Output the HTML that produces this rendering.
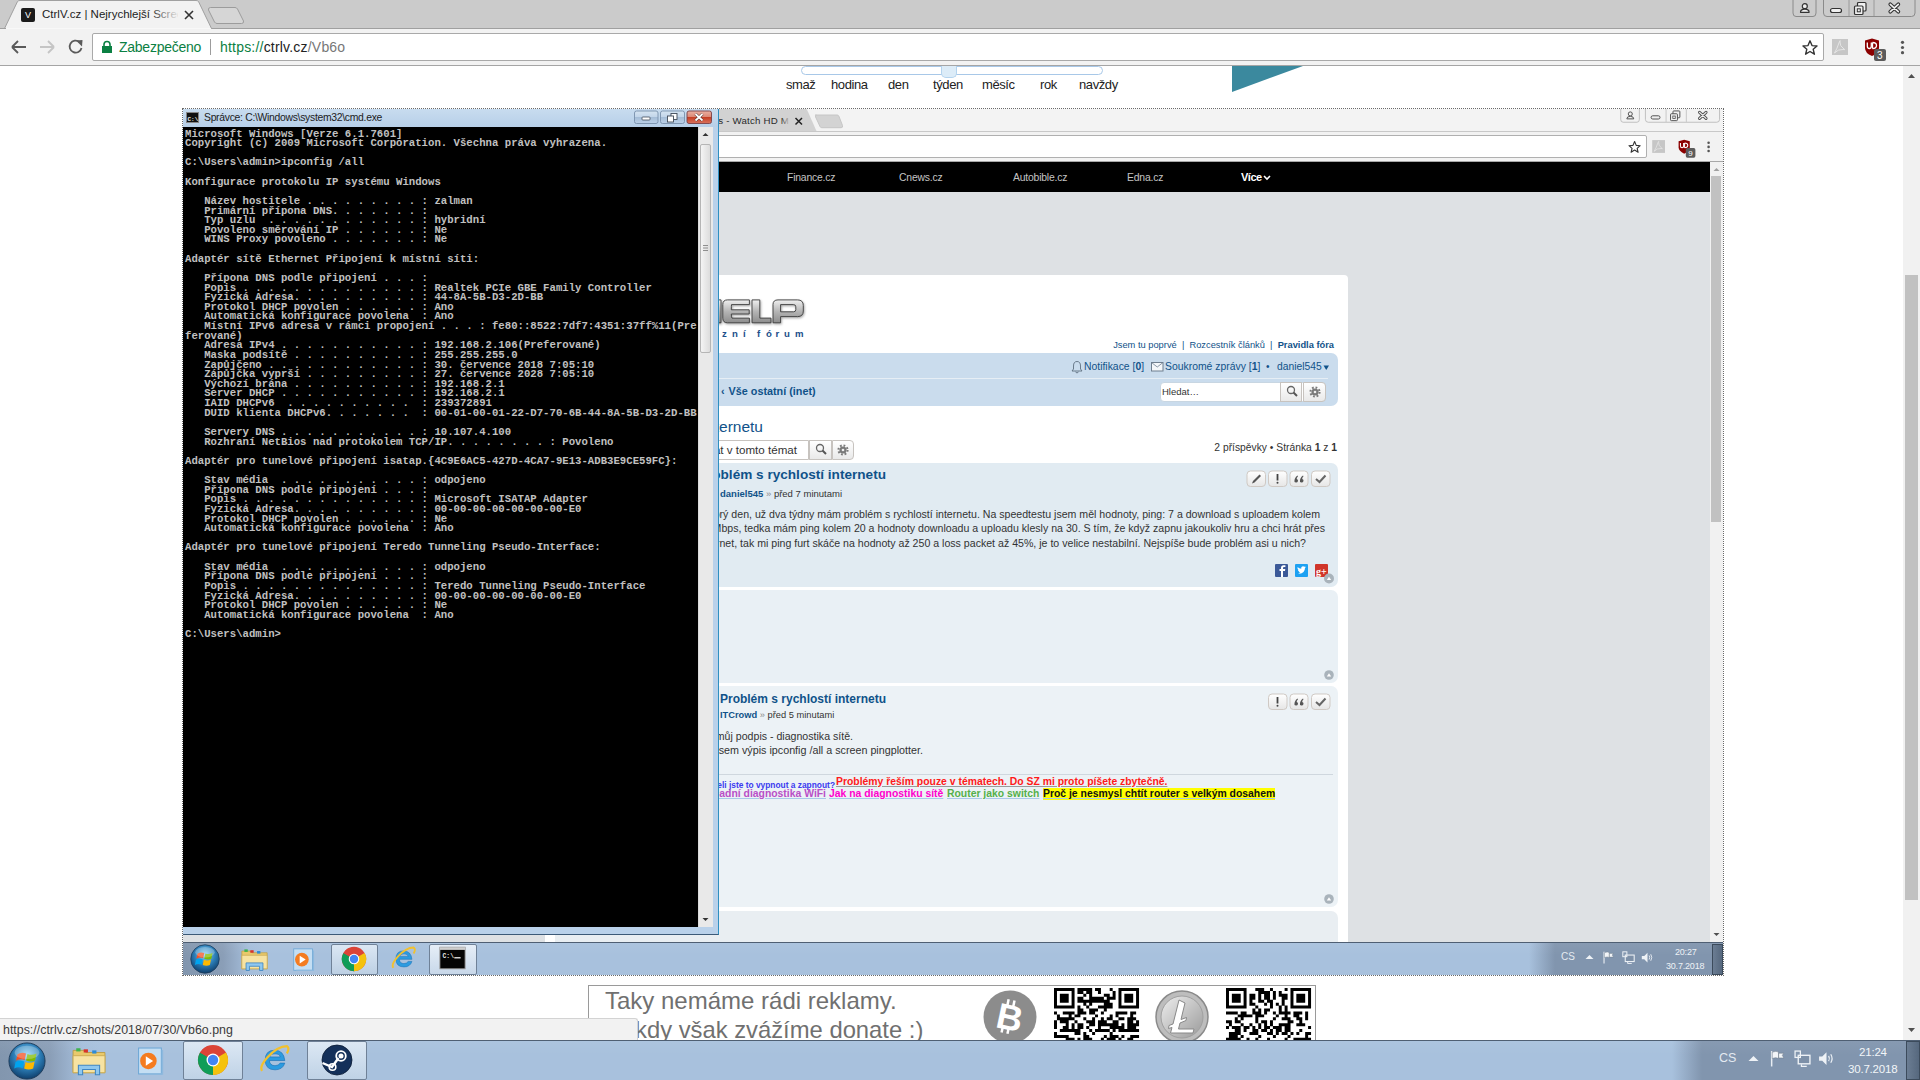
<!DOCTYPE html>
<html><head><meta charset="utf-8">
<style>
*{margin:0;padding:0;box-sizing:border-box}
html,body{width:1920px;height:1080px;overflow:hidden;background:#fff;font-family:"Liberation Sans",sans-serif}
div,span,svg{position:absolute}
.t{white-space:nowrap}
/* outer chrome */
#tabstrip{left:0;top:0;width:1920px;height:28px;background:#cbcbcb}
#toolbar{left:0;top:29px;width:1920px;height:37px;background:#f2f2f2;border-bottom:1px solid #a5a5a5}
#omni{left:92px;top:33px;width:1732px;height:28px;background:#fff;border:1px solid #a9a9a9;border-radius:2px}
#vscroll{left:1903px;top:66px;width:17px;height:974px;background:#f1f1f1}
#status{left:0;top:1018px;width:638px;height:22px;background:#f2f2f2;border-top:1px solid #d3d3d3;border-right:1px solid #d3d3d3;border-top-right-radius:3px;font-size:12.4px;color:#3a3a3a;padding:4px 0 0 3px;white-space:nowrap}
.tb{background:linear-gradient(to right,#a8c1dd 0,#a8c1dd 100%);border-top:1px solid #5b6b80}
#taskbar{left:0;top:1040px;width:1920px;height:40px}
/* screenshot */
#shotb{left:182px;top:108px;width:1542px;height:868px;border:1px dotted #6a6a6a}
#shot{left:183px;top:109px;width:1540px;height:866px;overflow:hidden;background:#dee1e4}
#sc{left:-183px;top:-109px;width:1920px;height:1080px}
.cmdtxt{font-family:"Liberation Mono",monospace;font-size:10.67px;line-height:9.6px;color:#c0c0c0;font-weight:bold;white-space:pre;letter-spacing:0}
</style></head><body>

<svg width="0" height="0" style="left:0;top:0">
<defs>
  <radialGradient id="orbg" cx="0.5" cy="0.35" r="0.65">
    <stop offset="0" stop-color="#8fd3f5"/><stop offset="0.55" stop-color="#2d7fb8"/><stop offset="1" stop-color="#0f3f6c"/>
  </radialGradient>
  <symbol id="orb" viewBox="0 0 40 40">
    <circle cx="20" cy="20" r="19" fill="url(#orbg)" stroke="#1d3b5a" stroke-width="1"/>
    <path d="M10 13 Q14 10 19 12 L17.5 19 Q13 17 8.5 19.5Z" fill="#f25022"/>
    <path d="M20.5 12.5 Q25 14.5 30 12 L28.5 19.5 Q24 21.5 19 19.5Z" fill="#7fba00"/>
    <path d="M8 21 Q12.5 18.5 17 20.5 L15.5 27.5 Q11 25.5 6.5 28Z" fill="#00a4ef"/>
    <path d="M18.5 21 Q23 23 28 20.5 L26.5 28 Q22 30 17 28Z" fill="#ffb900"/>
    <ellipse cx="20" cy="11" rx="13" ry="7" fill="#fff" opacity="0.25"/>
  </symbol>
  <symbol id="folder" viewBox="0 0 32 28">
    <path d="M1 4 H11 L13 6 H31 V25 H1Z" fill="#e9c96b" stroke="#b99a3e" stroke-width="0.8"/>
    <rect x="4" y="2" width="4" height="3" fill="#3fb34f"/><rect x="11" y="3" width="4" height="3" fill="#d9342b"/><rect x="19" y="4" width="4" height="3" fill="#2c8bd8"/>
    <path d="M1 9 H31 V25 H1Z" fill="#f7e3a2" stroke="#c9a94e" stroke-width="0.8"/>
    <path d="M6 27 V18 H26 V27 H22 V22 H10 V27Z" fill="#8fc8ef" stroke="#3f86c3" stroke-width="1"/>
  </symbol>
  <symbol id="wmp" viewBox="0 0 30 28">
    <rect x="3" y="1" width="22" height="25" fill="#c4def3" stroke="#6ea7d6" stroke-width="1"/>
    <path d="M26 3 V26 H6" fill="none" stroke="#8db9de" stroke-width="1.5"/>
    <circle cx="12.5" cy="13.5" r="8" fill="#f47c20"/>
    <path d="M10 9 L17 13.5 L10 18Z" fill="#fff"/>
  </symbol>
  <symbol id="chrome" viewBox="0 0 32 32">
    <circle cx="16" cy="16" r="15" fill="#db4437"/>
    <path d="M16 16 L29 8.5 A15 15 0 0 1 16 31Z" fill="#f4c20d"/>
    <path d="M16 16 L16 31 A15 15 0 0 1 3 8.5Z" fill="#0f9d58"/>
    <path d="M16 16 L3 8.5 A15 15 0 0 1 10 2.5 L16 12" fill="#db4437"/>
    <circle cx="16" cy="16" r="6.5" fill="#fff"/>
    <circle cx="16" cy="16" r="5.2" fill="#4285f4"/>
  </symbol>
  <symbol id="ie" viewBox="0 0 32 32">
    <path d="M16 7 Q25 7 26 17 H11 Q11.5 22 16.5 22 Q20 22 21.5 19.5 H26 Q24 26 16.5 26 Q7 26 7 16.5 Q7 7 16 7Z M11.5 13.5 H21.5 Q21 10.5 16.5 10.5 Q12 10.5 11.5 13.5Z" fill="#2c9be0" stroke="#1a6fb3" stroke-width="0.6"/>
    <path d="M4 27 Q1 23 9 14 Q19 3 28 3 Q31 5 28 10" fill="none" stroke="#f2c12e" stroke-width="2.2"/>
  </symbol>
  <symbol id="cmdi" viewBox="0 0 30 26">
    <rect x="1" y="1" width="28" height="24" fill="#050505" stroke="#9a9a9a" stroke-width="1"/>
    <rect x="1" y="1" width="28" height="3" fill="#cfcfcf"/>
    <text x="4" y="13" font-size="7" font-family="Liberation Mono" font-weight="bold" fill="#e8e8e8">C:\</text>
    <rect x="17" y="12" width="7" height="1.5" fill="#e8e8e8"/>
  </symbol>
  <symbol id="steam" viewBox="0 0 32 32">
    <circle cx="16" cy="16" r="15" fill="#14305a"/>
    <circle cx="16" cy="16" r="15" fill="none" stroke="#0a1a33" stroke-width="0.8"/>
    <circle cx="20" cy="12" r="4.8" fill="none" stroke="#fff" stroke-width="1.8"/>
    <circle cx="20" cy="12" r="2.5" fill="#fff"/>
    <path d="M1.5 19 L11 23 L17.5 14" fill="none" stroke="#fff" stroke-width="2.4"/>
    <circle cx="11.5" cy="23" r="3.3" fill="none" stroke="#fff" stroke-width="1.6"/>
  </symbol>
  <symbol id="flag" viewBox="0 0 16 16">
    <path d="M2.5 1 V15.5" stroke="#e8edf3" stroke-width="1.4"/>
    <path d="M3 2 Q7 0.5 9 2 V8 Q6.5 6.5 3 8Z M9 3 H14 L12.5 5 L14 7.5 H9Z" fill="#f2f5f8" stroke="#6d7b8a" stroke-width="0.5"/>
  </symbol>
  <symbol id="net" viewBox="0 0 16 16">
    <rect x="4" y="5" width="11" height="8" fill="#7d90a8" stroke="#eef2f6" stroke-width="1.3"/>
    <path d="M7 13.5 V15.5 H12" stroke="#eef2f6" stroke-width="1.2" fill="none"/>
    <rect x="1" y="1" width="5" height="6" fill="none" stroke="#eef2f6" stroke-width="1.2"/>
  </symbol>
  <symbol id="vol" viewBox="0 0 16 16">
    <path d="M1 6 H4 L8 2 V14 L4 10 H1Z" fill="#eef2f6"/>
    <path d="M10 5.5 Q11.5 8 10 10.5 M12 4 Q14.5 8 12 12" fill="none" stroke="#eef2f6" stroke-width="1.1"/>
  </symbol>
</defs></svg>

<!-- ========== OUTER CHROME ========== -->
<div id="tabstrip"></div>
<div style="left:211px;top:28px;width:1709px;height:1px;background:#a0a0a0"></div>
<svg style="left:0;top:0" width="260" height="29">
  <path d="M4.5 28.5 L17.5 1.5 Q18.5 0.5 20 0.5 L196 0.5 Q197.5 0.5 198.5 1.5 L211.5 28.5" fill="#f2f2f2" stroke="#a0a0a0"/>
  <path d="M210.5 7.5 L235 7.5 Q236.5 7.5 237.5 9 L243.5 21 Q244 23.5 241.5 23.5 L217 23.5 Q215.5 23.5 214.5 22 L208.5 10 Q208 7.5 210.5 7.5Z" fill="#d6d6d6" stroke="#9c9c9c"/>
</svg>
<div style="left:21px;top:8px;width:14px;height:14px;background:#1b1b1b;border-radius:2px;color:#fff;font-size:9px;text-align:center;line-height:14px">V</div>
<div class="t" style="left:42px;top:8px;font-size:11.5px;color:#222;width:136px;overflow:hidden">CtrlV.cz | Nejrychlejší Screenshot</div>
<div style="left:150px;top:4px;width:30px;height:20px;background:linear-gradient(to right,rgba(242,242,242,0),#f2f2f2)"></div>
<svg style="left:184px;top:10px" width="10" height="10"><path d="M1 1L9 9M9 1L1 9" stroke="#333" stroke-width="1.6"/></svg>
<!-- window controls -->
<svg style="left:1790px;top:0" width="130" height="18">
  <path d="M3 0 V13 Q3 16.5 6 16.5 H23 Q26 16.5 26 13 V0" fill="#cbcbcb" stroke="#8a8a8a"/>
  <circle cx="14.8" cy="6.2" r="2.5" fill="#f0f0f0" stroke="#333" stroke-width="1.2"/>
  <path d="M10.5 12.3 Q10.5 9.2 14.8 9.2 Q19.1 9.2 19.1 12.3Z" fill="#f0f0f0" stroke="#333" stroke-width="1.2" stroke-linejoin="round"/>
  <path d="M33.5 0 V13 Q33.5 16.5 37 16.5 H121.5 Q125 16.5 125 13 V0" fill="#cbcbcb" stroke="#8a8a8a"/>
  <path d="M59 0 V16 M84 0 V16" stroke="#9a9a9a"/>
  <rect x="40.5" y="8.5" width="11" height="4" rx="2" fill="#f0f0f0" stroke="#333" stroke-width="1.2"/>
  <rect x="67.5" y="2.5" width="8.5" height="8.5" rx="1" fill="#f0f0f0" stroke="#333" stroke-width="1.2"/>
  <rect x="64.5" y="6" width="8.5" height="8.5" rx="1" fill="#f0f0f0" stroke="#333" stroke-width="1.2"/>
  <rect x="67.3" y="8.8" width="3" height="3" fill="none" stroke="#333" stroke-width="1"/>
  <path d="M100.3 4.3 L108.3 11.7 M108.3 4.3 L100.3 11.7" stroke="#333" stroke-width="3.8" stroke-linecap="round"/>
  <path d="M100.3 4.3 L108.3 11.7 M108.3 4.3 L100.3 11.7" stroke="#f0f0f0" stroke-width="1.6" stroke-linecap="round"/>
</svg>
<div id="toolbar"></div>
<div style="left:0;top:28px;width:6px;height:1px;background:#a0a0a0"></div>
<svg style="left:8px;top:36px" width="80" height="22">
  <path d="M4 11 H18 M4 11 L10 5 M4 11 L10 17" fill="none" stroke="#5a5a5a" stroke-width="1.8"/>
  <path d="M46 11 H32 M46 11 L40 5 M46 11 L40 17" fill="none" stroke="#c5c5c5" stroke-width="1.8"/>
  <path d="M71.5 6 A6 6 0 1 0 73.5 12" fill="none" stroke="#5a5a5a" stroke-width="1.8"/>
  <path d="M68 4.5 L74.5 4 L74 10.5Z" fill="#5a5a5a"/>
</svg>
<div id="omni"></div>
<svg style="left:101px;top:40px" width="12" height="14">
  <rect x="1" y="6" width="10" height="7" fill="#0b8043"/>
  <path d="M3 6.5 V4.5 A3 3 0 0 1 9 4.5 V6.5" fill="none" stroke="#0b8043" stroke-width="1.6"/>
</svg>
<div class="t" style="left:119px;top:39px;font-size:14px;color:#0b8043;letter-spacing:-0.25px">Zabezpečeno</div>
<div style="left:210px;top:39px;width:1px;height:16px;background:#9c9c9c"></div>
<div class="t" style="left:220px;top:39px;font-size:14px;color:#0b8043;letter-spacing:0.2px">https://<span style="position:static;color:#222">ctrlv.cz</span><span style="position:static;color:#777">/Vb6o</span></div>
<svg style="left:1800px;top:38px" width="110" height="24">
  <path d="M10 2.8 L12 7.6 L17 8 L13.2 11.3 L14.4 16.2 L10 13.5 L5.6 16.2 L6.8 11.3 L3 8 L8 7.6Z" fill="none" stroke="#333" stroke-width="1.4" stroke-linejoin="round"/>
  <rect x="32" y="1" width="16" height="16" fill="#c6c6c6"/>
  <path d="M34.5 15 Q37 11 39.5 3.5 Q40.5 1.5 40 4 Q39.5 8 44 11 Q46 12 43 11.5 Q38 11 34.5 15Z" fill="none" stroke="#e8e8e8" stroke-width="0.9"/>
  <path d="M65 2.5 L72 0.5 L79 2.5 V10 Q79 15 72 18 Q65 15 65 10Z" fill="#8b0000"/>
  <path d="M67.3 4.5 V8 Q67.3 10.5 69.3 10.5 Q71.3 10.5 71.3 8 V4.5" fill="none" stroke="#fff" stroke-width="1.3"/>
  <path d="M72.5 4.5 V10.5 M72.5 4.5 Q76.5 4.5 76.5 7.5 Q76.5 10.5 72.5 10.5" fill="none" stroke="#fff" stroke-width="1.3"/>
  <rect x="74" y="11" width="12" height="12" rx="2" fill="#5c5c5c"/>
  <text x="77" y="21" font-size="10" fill="#fff" font-family="Liberation Sans">3</text>
  <circle cx="102.5" cy="4.3" r="1.6" fill="#555"/><circle cx="102.5" cy="9.5" r="1.6" fill="#555"/><circle cx="102.5" cy="14.7" r="1.6" fill="#555"/>
</svg>

<!-- ========== PAGE ========== -->
<div id="vscroll"></div>
<svg style="left:1903px;top:66px" width="17" height="974">
  <path d="M5 12 L8.5 8 L12 12Z" fill="#505050"/>
  <rect x="2" y="209" width="13" height="625" fill="#c1c1c1"/>
  <path d="M5 962 L8.5 966 L12 962Z" fill="#505050"/>
</svg>
<!-- slider -->
<div style="left:801px;top:66px;width:302px;height:9px;border:1px solid #a8c8e8;border-radius:5px;background:#fff"></div>
<div style="left:941px;top:66px;width:16px;height:12px;background:#dcecf8;border:1px solid #b3d3ee;border-top:none;border-radius:0 0 5px 5px"></div>
<div class="t" style="left:786px;top:77px;font-size:13px;color:#222;letter-spacing:-0.4px">smaž</div>
<div class="t" style="left:831px;top:77px;font-size:13px;color:#222;letter-spacing:-0.4px">hodina</div>
<div class="t" style="left:888px;top:77px;font-size:13px;color:#222;letter-spacing:-0.4px">den</div>
<div class="t" style="left:933px;top:77px;font-size:13px;color:#222;letter-spacing:-0.4px">týden</div>
<div class="t" style="left:982px;top:77px;font-size:13px;color:#222;letter-spacing:-0.4px">měsíc</div>
<div class="t" style="left:1040px;top:77px;font-size:13px;color:#222;letter-spacing:-0.4px">rok</div>
<div class="t" style="left:1079px;top:77px;font-size:13px;color:#222;letter-spacing:-0.4px">navždy</div>
<svg style="left:1232px;top:66px" width="72" height="27"><path d="M0 0 H71 L0 26Z" fill="#3b899e"/></svg>

<!-- ========== SCREENSHOT ========== -->
<div id="shot"><div id="sc">
<!-- inner chrome -->
<div style="left:183px;top:109px;width:1540px;height:23px;background:#f3f3f3"></div>
<svg style="left:700px;top:109px" width="160" height="24">
  <path d="M0 0 H106.7 L116.7 22.5 H0Z" fill="#d2d2d2"/>
  <path d="M115.4 6 H137 Q138.3 6 138.8 7 L142.5 16.5 Q143 18.7 141.2 18.7 H121.8 Q120.6 18.7 120.1 17.7 L115.6 8 Q115 6 116.2 6Z" fill="#d3d3d3" stroke="#c6c6c6"/>
</svg>
<div class="t" style="right:1131px;top:115px;font-size:9.7px;color:#2a2a2a;letter-spacing:0.2px">Free Movies - Watch HD M</div>
<div style="left:781px;top:112px;width:12px;height:16px;background:linear-gradient(to right,rgba(210,210,210,0),#d2d2d2 75%)"></div>
<svg style="left:794px;top:117px" width="10" height="9"><path d="M1.5 1L8 7.5M8 1L1.5 7.5" stroke="#222" stroke-width="1.5"/></svg>
<!-- inner window controls -->
<svg style="left:1615px;top:109px" width="110" height="16"><g transform="translate(3.3,-0.1) scale(0.81)">
  <path d="M3 0 V13 Q3 16.5 6 16.5 H23 Q26 16.5 26 13 V0" fill="#f2f2f2" stroke="#b5b5b5"/>
  <circle cx="14.8" cy="6.2" r="2.5" fill="#f0f0f0" stroke="#505050" stroke-width="1.2"/>
  <path d="M10.5 12.3 Q10.5 9.2 14.8 9.2 Q19.1 9.2 19.1 12.3Z" fill="#f0f0f0" stroke="#505050" stroke-width="1.2" stroke-linejoin="round"/>
  <path d="M33.5 0 V13 Q33.5 16.5 37 16.5 H121.5 Q125 16.5 125 13 V0" fill="#f2f2f2" stroke="#b5b5b5"/>
  <path d="M59 0 V16 M84 0 V16" stroke="#bdbdbd"/>
  <rect x="40.5" y="8.5" width="11" height="4" rx="2" fill="#f0f0f0" stroke="#505050" stroke-width="1.2"/>
  <rect x="67.5" y="2.5" width="8.5" height="8.5" rx="1" fill="#f0f0f0" stroke="#505050" stroke-width="1.2"/>
  <rect x="64.5" y="6" width="8.5" height="8.5" rx="1" fill="#f0f0f0" stroke="#505050" stroke-width="1.2"/>
  <rect x="67.3" y="8.8" width="3" height="3" fill="none" stroke="#505050" stroke-width="1"/>
  <path d="M100.3 4.3 L108.3 11.7 M108.3 4.3 L100.3 11.7" stroke="#505050" stroke-width="3.8" stroke-linecap="round"/>
  <path d="M100.3 4.3 L108.3 11.7 M108.3 4.3 L100.3 11.7" stroke="#f0f0f0" stroke-width="1.6" stroke-linecap="round"/>
</g></svg>
<div style="left:183px;top:131px;width:1540px;height:31px;background:#f2f2f2;border-top:1px solid #c8c8c8;border-bottom:1px solid #a8a8a8"></div>
<div style="left:600px;top:135px;width:1047px;height:23px;background:#fff;border:1px solid #b0b0b0;border-radius:2px"></div>
<svg style="left:1600px;top:130px" width="123" height="32"><g transform="translate(26.6,9.3) scale(0.8)">
  <path d="M10 2.8 L12 7.6 L17 8 L13.2 11.3 L14.4 16.2 L10 13.5 L5.6 16.2 L6.8 11.3 L3 8 L8 7.6Z" fill="none" stroke="#333" stroke-width="1.4" stroke-linejoin="round"/>
  <rect x="32" y="1" width="16" height="16" fill="#c6c6c6"/>
  <path d="M34.5 15 Q37 11 39.5 3.5 Q40.5 1.5 40 4 Q39.5 8 44 11 Q46 12 43 11.5 Q38 11 34.5 15Z" fill="none" stroke="#e8e8e8" stroke-width="0.9"/>
  <path d="M65 2.5 L72 0.5 L79 2.5 V10 Q79 15 72 18 Q65 15 65 10Z" fill="#8b0000"/>
  <path d="M67.3 4.5 V8 Q67.3 10.5 69.3 10.5 Q71.3 10.5 71.3 8 V4.5" fill="none" stroke="#fff" stroke-width="1.3"/>
  <path d="M72.5 4.5 V10.5 M72.5 4.5 Q76.5 4.5 76.5 7.5 Q76.5 10.5 72.5 10.5" fill="none" stroke="#fff" stroke-width="1.3"/>
  <rect x="74" y="11" width="12" height="12" rx="2" fill="#5c5c5c"/>
  <text x="77" y="21" font-size="10" fill="#fff" font-family="Liberation Sans">9</text>
  <circle cx="102.5" cy="4.3" r="1.6" fill="#555"/><circle cx="102.5" cy="9.5" r="1.6" fill="#555"/><circle cx="102.5" cy="14.7" r="1.6" fill="#555"/>
</g></svg>

<!-- black nav -->
<div style="left:183px;top:162px;width:1527px;height:30px;background:#000"></div>
<div class="t" style="left:787px;top:172px;font-size:10.4px;color:#c4c4c4;letter-spacing:-0.2px">Finance.cz</div>
<div class="t" style="left:899px;top:172px;font-size:10.4px;color:#c4c4c4;letter-spacing:-0.2px">Cnews.cz</div>
<div class="t" style="left:1013px;top:172px;font-size:10.4px;color:#c4c4c4;letter-spacing:-0.2px">Autobible.cz</div>
<div class="t" style="left:1127px;top:172px;font-size:10.4px;color:#c4c4c4;letter-spacing:-0.2px">Edna.cz</div>
<div class="t" style="left:1241px;top:171px;font-size:11px;color:#fff;font-weight:bold;letter-spacing:-0.5px">Více</div>
<svg style="left:1263px;top:175px" width="8" height="6"><path d="M1 1 L4 4 L7 1" fill="none" stroke="#fff" stroke-width="1.6"/></svg>
<!-- inner scrollbar -->
<div style="left:1710px;top:162px;width:13px;height:780px;background:#f1f1f1"></div>
<div style="left:1711px;top:176px;width:10px;height:346px;background:#c1c1c1"></div>
<svg style="left:1710px;top:164px" width="13" height="10"><path d="M3.5 7 L6.5 4 L9.5 7Z" fill="#a0a0a0"/></svg>
<svg style="left:1710px;top:930px" width="13" height="10"><path d="M3.5 3 L6.5 6 L9.5 3Z" fill="#505050"/></svg>

<!-- forum -->
<div style="left:545px;top:275px;width:803px;height:700px;background:#fff;border-radius:0 4px 0 0"></div>
<!-- logo -->
<svg style="left:715px;top:290px" width="100" height="52">
  <defs><linearGradient id="lg" x1="0" y1="0" x2="0" y2="1">
    <stop offset="0" stop-color="#f0f0f0"/><stop offset="0.5" stop-color="#b5b5b5"/><stop offset="1" stop-color="#8d8d8d"/></linearGradient>
    <filter id="lsh" x="-10%" y="-10%" width="130%" height="140%"><feDropShadow dx="0.8" dy="1.2" stdDeviation="0.8" flood-color="#000" flood-opacity="0.35"/></filter></defs>
  <g fill="url(#lg)" stroke="#3a3a3a" stroke-width="0.9" filter="url(#lsh)" fill-rule="evenodd">
    <path d="M-3 9.9 H6 V32.8 H-3Z"/>
    <path d="M7.8 14.5 Q7.8 9.9 12.5 9.9 H34.4 V14.6 H16.5 Q16.3 16 16.3 19.8 H34.2 V24 H16.3 Q16.3 27.5 17 28.1 H34.4 V32.8 H12.5 Q7.8 32.8 7.8 28.2Z"/>
    <path d="M37 9.9 H44.8 V28.1 H56 V32.8 H37Z"/>
    <path d="M58 32.8 V14.5 Q58 9.9 63 9.9 H82.5 Q88.3 9.9 88.3 15.5 V21 Q88.3 26.6 82.5 26.6 H65.6 V32.8Z M65.6 14.6 V21.8 H78.5 Q80.8 21.8 80.8 19.6 V16.8 Q80.8 14.6 78.5 14.6Z"/>
  </g>
  <text x="7.0" y="46.8" font-family="Liberation Sans" font-weight="bold" font-size="9.6" fill="#1d4f8b">z</text><text x="17.0" y="46.8" font-family="Liberation Sans" font-weight="bold" font-size="9.6" fill="#1d4f8b">n</text><text x="28.0" y="46.8" font-family="Liberation Sans" font-weight="bold" font-size="9.6" fill="#1d4f8b">í</text><text x="42.0" y="46.8" font-family="Liberation Sans" font-weight="bold" font-size="9.6" fill="#1d4f8b">f</text><text x="51.0" y="46.8" font-family="Liberation Sans" font-weight="bold" font-size="9.6" fill="#1d4f8b">ó</text><text x="60.5" y="46.8" font-family="Liberation Sans" font-weight="bold" font-size="9.6" fill="#1d4f8b">r</text><text x="69.0" y="46.8" font-family="Liberation Sans" font-weight="bold" font-size="9.6" fill="#1d4f8b">u</text><text x="80.0" y="46.8" font-family="Liberation Sans" font-weight="bold" font-size="9.6" fill="#1d4f8b">m</text>
</svg>
<div class="t" style="right:586px;top:340px;font-size:9.3px;color:#105289">Jsem tu poprvé &nbsp;<span style="position:static;color:#105289">|</span>&nbsp; Rozcestník článků &nbsp;<span style="position:static">|</span>&nbsp; <b>Pravidla fóra</b></div>
<!-- navbar -->
<div style="left:555px;top:353px;width:783px;height:53px;background:#cadced;border-radius:7px"></div>
<div style="left:565px;top:378px;width:763px;height:1px;background:#e6eef5"></div>
<svg style="left:1071px;top:360px" width="12" height="14"><path d="M6 1.5 Q2.5 1.5 2.5 6 V9 L1 11 H11 L9.5 9 V6 Q9.5 1.5 6 1.5Z M4.5 12 Q6 14 7.5 12" fill="none" stroke="#5f6f80" stroke-width="0.9"/></svg>
<div class="t" style="left:1084px;top:361px;font-size:10.4px;color:#105289">Notifikace [<b>0</b>]</div>
<svg style="left:1151px;top:362px" width="13" height="10"><rect x="0.5" y="0.5" width="11.5" height="8.5" fill="#f4f7fa" stroke="#6f7f90"/><path d="M0.5 0.5 L6.25 5 L12 0.5" fill="none" stroke="#6f7f90" stroke-width="0.8"/></svg>
<div class="t" style="left:1165px;top:361px;font-size:10.4px;color:#105289">Soukromé zprávy [<b>1</b>]</div>
<div class="t" style="left:1266px;top:361px;font-size:10px;color:#105289">•</div>
<div class="t" style="left:1277px;top:361px;font-size:10.3px;color:#105289">daniel545</div>
<svg style="left:1323px;top:365px" width="7" height="6"><path d="M0.5 0.5 H6 L3.25 5Z" fill="#105289"/></svg>
<div class="t" style="left:721px;top:385px;font-size:10.8px;color:#105289;font-weight:bold">‹ <span style="position:static;margin-left:1px">Vše ostatní (inet)</span></div>
<div style="left:1160px;top:382px;width:166px;height:20px;background:#fff;border-radius:4px;border:1px solid #c8d6e2"></div>
<div class="t" style="left:1162px;top:386px;font-size:9.5px;color:#333">Hledat…</div>
<div style="left:1280px;top:382px;width:22px;height:20px;background:linear-gradient(#fff,#e9e9e9);border:1px solid #c7c3bf"></div>
<div style="left:1303px;top:382px;width:23px;height:20px;background:linear-gradient(#fff,#e9e9e9);border:1px solid #c7c3bf;border-radius:0 4px 4px 0"></div>
<svg style="left:1284px;top:384px" width="40" height="16">
  <circle cx="7" cy="6" r="3.5" fill="none" stroke="#666" stroke-width="1.3"/><path d="M9.5 8.5 L13 12" stroke="#555" stroke-width="2"/>
  <circle cx="31" cy="8" r="4.6" fill="none" stroke="#7a7a7a" stroke-width="2" stroke-dasharray="1.8 1.81"/><circle cx="31" cy="8" r="3.6" fill="#7a7a7a"/><circle cx="31" cy="8" r="1.3" fill="#eee"/>
</svg>
<!-- topic title -->
<div class="t" style="right:1157px;top:418px;font-size:15.5px;color:#105289">Problém s rychlostí internetu</div>
<div style="left:555px;top:440px;width:254px;height:20px;background:#fff;border:1px solid #c7c3bf;border-radius:4px 0 0 4px"></div>
<div class="t" style="right:1123px;top:443px;font-size:11.6px;color:#333">Hledat v tomto témat</div>
<div style="left:809px;top:440px;width:23px;height:20px;background:linear-gradient(#fff,#e9e9e9);border:1px solid #c7c3bf"></div>
<div style="left:832px;top:440px;width:22px;height:20px;background:linear-gradient(#fff,#e9e9e9);border:1px solid #c7c3bf;border-radius:0 4px 4px 0"></div>
<svg style="left:813px;top:442px" width="40" height="16">
  <circle cx="7" cy="6" r="3.5" fill="none" stroke="#666" stroke-width="1.3"/><path d="M9.5 8.5 L13 12" stroke="#555" stroke-width="2"/>
  <circle cx="30" cy="8" r="4.6" fill="none" stroke="#7a7a7a" stroke-width="2" stroke-dasharray="1.8 1.81"/><circle cx="30" cy="8" r="3.6" fill="#7a7a7a"/><circle cx="30" cy="8" r="1.3" fill="#eee"/>
</svg>
<div class="t" style="right:583px;top:442px;font-size:10.3px;color:#333">2 příspěvky • Stránka <b>1</b> z <b>1</b></div>

<!-- post 1 -->
<svg width="0" height="0" style="left:0;top:0"><defs><linearGradient id="pbtn" x1="0" y1="0" x2="0" y2="1"><stop offset="0" stop-color="#ffffff"/><stop offset="1" stop-color="#e6e6e6"/></linearGradient></defs></svg>
<div style="left:555px;top:463px;width:783px;height:124px;background:#e1ebf2;border-radius:7px"></div>
<div class="t" style="right:1034px;top:467px;font-size:13.6px;color:#105289;font-weight:bold">Problém s rychlostí internetu</div>
<div class="t" style="left:720px;top:488px;font-size:9.5px;color:#333"><b style="color:#105289">daniel545</b> <span style="position:static;color:#8a8a8a">»</span> před 7 minutami</div>
<div class="t" style="right:600px;top:508px;font-size:10.6px;color:#333">Dobrý den, už dva týdny mám problém s rychlostí internetu. Na speedtestu jsem měl hodnoty, ping: 7 a download s uploadem kolem</div>
<div class="t" style="right:595px;top:522px;font-size:10.6px;color:#333">100 Mbps, tedka mám ping kolem 20 a hodnoty downloadu a uploadu klesly na 30. S tím, že když zapnu jakoukoliv hru a chci hrát přes</div>
<div class="t" style="right:614px;top:536.5px;font-size:10.6px;color:#333">internet, tak mi ping furt skáče na hodnoty až 250 a loss packet až 45%, je to velice nestabilní. Nejspíše bude problém asi u nich?</div>
<svg style="left:1245px;top:469px" width="90" height="20">
  <g fill="url(#bg)" stroke="#cfc9c4">
  <rect x="2" y="2" width="18.5" height="15.5" rx="3.5" fill="url(#pbtn)"/>
  <rect x="23.5" y="2" width="18.5" height="15.5" rx="3.5" fill="url(#pbtn)"/>
  <rect x="45" y="2" width="18" height="15.5" rx="3.5" fill="url(#pbtn)"/>
  <rect x="66.5" y="2" width="18.5" height="15.5" rx="3.5" fill="url(#pbtn)"/>
  </g>
  <path d="M7 14.5 L8 12 L14.5 5.5 L16 7 L9.5 13.5Z" fill="#555"/>
  <path d="M32.5 5 V11.5" stroke="#444" stroke-width="1.8"/><circle cx="32.5" cy="13.8" r="1" fill="#444"/>
  <path d="M49.5 13 Q49 9 52.5 6.5 L53 7.3 Q51.5 8.7 51.7 10 Q53.3 10.3 53 12 Q52.5 13.8 50.8 13.6Z M55 13 Q54.5 9 58 6.5 L58.5 7.3 Q57 8.7 57.2 10 Q58.8 10.3 58.5 12 Q58 13.8 56.3 13.6Z" fill="#555"/>
  <path d="M71 10 L74.5 13 L80.5 6.5" fill="none" stroke="#666" stroke-width="2"/>
</svg>
<svg style="left:1274px;top:563px" width="62" height="22">
  <rect x="1" y="1" width="13" height="13" rx="1" fill="#3b5998"/>
  <path d="M9 14 V8 H11 L11.3 6 H9 V4.8 Q9 4 10 4 H11.4 V2.3 H9.6 Q7 2.3 7 5 V6 H5.5 V8 H7 V14Z" fill="#fff"/>
  <rect x="21" y="1" width="13" height="13" rx="1" fill="#1da1f2"/>
  <path d="M24 10.5 Q27 11.5 29.5 9 Q31 7 31 5 L32 4 L31 4.3 L31.5 3.3 L30.4 3.8 Q29 2.6 27.5 4 Q27 5 27.3 5.8 Q25 5.7 23.6 4 Q23 5.5 24.5 7 L23.8 6.8 Q24 8 25.3 8.5 L24.6 8.6 Q25 9.6 26.3 9.8 Q25.3 10.6 24 10.5Z" fill="#fff"/>
  <rect x="41" y="1" width="13" height="13" rx="1" fill="#d0352a"/>
  <text x="42" y="11.5" font-size="10" fill="#fff" font-family="Liberation Serif" font-weight="bold">g+</text>
  <circle cx="55" cy="15.5" r="5" fill="#a9b3bb"/>
  <path d="M52.8 17 L55 13.8 L57.2 17Z" fill="#fff"/>
</svg>

<!-- box 2 -->
<div style="left:555px;top:590px;width:783px;height:93px;background:#e9f0f5;border-radius:7px"></div>
<svg style="left:1324px;top:670px" width="10" height="10"><circle cx="5" cy="5" r="4.8" fill="#a9b3bb"/><path d="M2.8 6.5 L5 3.3 L7.2 6.5Z" fill="#fff"/></svg>

<!-- post 2 -->
<div style="left:555px;top:686px;width:783px;height:221px;background:#ecf2f6;border-radius:7px"></div>
<div class="t" style="right:1034px;top:692px;font-size:12px;color:#105289;font-weight:bold">Re: Problém s rychlostí internetu</div>
<div class="t" style="left:720px;top:710px;font-size:9.3px;color:#333"><b style="color:#105289">ITCrowd</b> <span style="position:static;color:#8a8a8a">»</span> před 5 minutami</div>
<div class="t" style="right:1067px;top:729.5px;font-size:10.6px;color:#333">Koukni na můj podpis - diagnostika sítě.</div>
<div class="t" style="right:997px;top:744px;font-size:10.75px;color:#333">Pošli sem výpis ipconfig /all a screen pingplotter.</div>
<svg style="left:1266px;top:692px" width="70" height="20">
  <g stroke="#cfc9c4">
  <rect x="2.5" y="2" width="18.5" height="15.5" rx="3.5" fill="url(#pbtn)"/>
  <rect x="24" y="2" width="18" height="15.5" rx="3.5" fill="url(#pbtn)"/>
  <rect x="45.5" y="2" width="18.5" height="15.5" rx="3.5" fill="url(#pbtn)"/>
  </g>
  <path d="M11.5 5 V11.5" stroke="#444" stroke-width="1.8"/><circle cx="11.5" cy="13.8" r="1" fill="#444"/>
  <path d="M28.5 13 Q28 9 31.5 6.5 L32 7.3 Q30.5 8.7 30.7 10 Q32.3 10.3 32 12 Q31.5 13.8 29.8 13.6Z M34 13 Q33.5 9 37 6.5 L37.5 7.3 Q36 8.7 36.2 10 Q37.8 10.3 37.5 12 Q37 13.8 35.3 13.6Z" fill="#555"/>
  <path d="M50 10 L53.5 13 L59.5 6.5" fill="none" stroke="#666" stroke-width="2"/>
</svg>
<div style="left:565px;top:774px;width:768px;height:1px;background:#cfd7de"></div>
<div class="t" style="right:1085px;top:779.5px;font-size:8.4px;color:#3b3bf0;font-weight:bold">Zkoušeli jste to vypnout a zapnout?</div>
<div class="t" style="left:836px;top:776px;font-size:10.4px;color:#ff1a1a;font-weight:bold;text-decoration:underline;text-decoration-color:#9a9a9a">Problémy řeším pouze v tématech. Do SZ mi proto píšete zbytečně.</div>
<div class="t" style="right:1094px;top:788px;font-size:10.4px;color:#b94fc7;font-weight:bold;text-decoration:underline;text-decoration-color:#a8c8e8">Základní diagnostika WiFi</div>
<div class="t" style="left:829px;top:788px;font-size:10.4px;color:#ff00cc;font-weight:bold;text-decoration:underline;text-decoration-color:#a8c8e8">Jak na diagnostiku sítě</div>
<div class="t" style="left:947px;top:788px;font-size:10.4px;color:#55b04a;font-weight:bold;text-decoration:underline;text-decoration-color:#a8c8e8">Router jako switch</div>
<div class="t" style="left:1043px;top:788px;font-size:10.4px;color:#111;font-weight:bold;background:#ffff00;text-decoration:underline;text-decoration-color:#a8c8e8;line-height:12px">Proč je nesmysl chtít router s velkým dosahem</div>
<svg style="left:1324px;top:894px" width="10" height="10"><circle cx="5" cy="5" r="4.8" fill="#a9b3bb"/><path d="M2.8 6.5 L5 3.3 L7.2 6.5Z" fill="#fff"/></svg>
<!-- box 3 -->
<div style="left:555px;top:911px;width:783px;height:60px;background:#e9eef2;border-radius:7px"></div>


<!-- cmd window -->
<div style="left:150px;top:109px;width:569px;height:826px;background:#b9d1ea;border:1px solid #3c5a78;border-right-color:#2f8fc0;border-top:none"></div>
<div style="left:151px;top:109px;width:567px;height:18px;background:linear-gradient(#c8dcef,#b7cfe8)"></div>
<svg style="left:186px;top:112px" width="14" height="12"><rect x="0.5" y="0.5" width="12" height="10" fill="#111" stroke="#888"/><text x="1.5" y="8.5" font-size="6" fill="#eee" font-family="Liberation Mono" font-weight="bold">C:\</text></svg>
<div class="t" style="left:204px;top:112px;font-size:10.4px;color:#1c1c1c;letter-spacing:-0.3px">Správce: C:\Windows\system32\cmd.exe</div>
<svg style="left:632px;top:109px" width="82" height="18">
  <defs><linearGradient id="wbtn" x1="0" y1="0" x2="0" y2="1"><stop offset="0" stop-color="#d6e4f2"/><stop offset="0.45" stop-color="#c3d6ea"/><stop offset="0.5" stop-color="#a5bdd7"/><stop offset="1" stop-color="#bcd1e8"/></linearGradient>
  <linearGradient id="cbtn" x1="0" y1="0" x2="0" y2="1"><stop offset="0" stop-color="#eab0a2"/><stop offset="0.45" stop-color="#dd8a78"/><stop offset="0.5" stop-color="#c53d23"/><stop offset="1" stop-color="#d9735e"/></linearGradient></defs>
  <rect x="2.5" y="2" width="23.5" height="12.5" rx="2" fill="url(#wbtn)" stroke="#7890ab" stroke-width="0.9"/>
  <rect x="10" y="8" width="8" height="3" rx="0.8" fill="#fff" stroke="#404a58" stroke-width="0.8"/>
  <rect x="28.5" y="2" width="24" height="12.5" rx="2" fill="url(#wbtn)" stroke="#7890ab" stroke-width="0.9"/>
  <rect x="39" y="4.5" width="6" height="6" fill="#fff" stroke="#404a58" stroke-width="0.9"/>
  <rect x="35.5" y="7" width="6" height="6" fill="#fff" stroke="#404a58" stroke-width="0.9"/>
  <rect x="55" y="2" width="24.5" height="12.5" rx="2" fill="url(#cbtn)" stroke="#7a3f45" stroke-width="0.9"/>
  <path d="M63.5 5 L70.5 11.5 M70.5 5 L63.5 11.5" stroke="#4a2a2a" stroke-width="3"/>
  <path d="M63.5 5 L70.5 11.5 M70.5 5 L63.5 11.5" stroke="#fff" stroke-width="1.8"/>
</svg>
<div style="left:183px;top:127px;width:515px;height:800px;background:#000"></div>
<div class="cmdtxt" style="left:185px;top:129.5px;line-height:9.625px">Microsoft Windows [Verze 6.1.7601]
Copyright (c) 2009 Microsoft Corporation. Všechna práva vyhrazena.

C:\Users\admin&gt;ipconfig /all

Konfigurace protokolu IP systému Windows

   Název hostitele . . . . . . . . . : zalman
   Primární přípona DNS. . . . . . . :
   Typ uzlu  . . . . . . . . . . . . : hybridní
   Povoleno směrování IP . . . . . . : Ne
   WINS Proxy povoleno . . . . . . . : Ne

Adaptér sítě Ethernet Připojení k místní síti:

   Přípona DNS podle připojení . . . :
   Popis . . . . . . . . . . . . . . : Realtek PCIe GBE Family Controller
   Fyzická Adresa. . . . . . . . . . : 44-8A-5B-D3-2D-BB
   Protokol DHCP povolen . . . . . . : Ano
   Automatická konfigurace povolena  : Ano
   Místní IPv6 adresa v rámci propojení . . . : fe80::8522:7df7:4351:37ff%11(Pre
ferované)
   Adresa IPv4 . . . . . . . . . . . : 192.168.2.106(Preferované)
   Maska podsítě . . . . . . . . . . : 255.255.255.0
   Zapůjčeno . . . . . . . . . . . . : 30. července 2018 7:05:10
   Zápůjčka vyprší . . . . . . . . . : 27. července 2028 7:05:10
   Výchozí brána . . . . . . . . . . : 192.168.2.1
   Server DHCP . . . . . . . . . . . : 192.168.2.1
   IAID DHCPv6  . . . . . . . . . .  : 239372891
   DUID klienta DHCPv6. . . . . . .  : 00-01-00-01-22-D7-70-6B-44-8A-5B-D3-2D-BB

   Servery DNS . . . . . . . . . . . : 10.107.4.100
   Rozhraní NetBios nad protokolem TCP/IP. . . . . . . . : Povoleno

Adaptér pro tunelové připojení isatap.{4C9E6AC5-427D-4CA7-9E13-ADB3E9CE59FC}:

   Stav média  . . . . . . . . . . . : odpojeno
   Přípona DNS podle připojení . . . :
   Popis . . . . . . . . . . . . . . : Microsoft ISATAP Adapter
   Fyzická Adresa. . . . . . . . . . : 00-00-00-00-00-00-00-E0
   Protokol DHCP povolen . . . . . . : Ne
   Automatická konfigurace povolena  : Ano

Adaptér pro tunelové připojení Teredo Tunneling Pseudo-Interface:

   Stav média  . . . . . . . . . . . : odpojeno
   Přípona DNS podle připojení . . . :
   Popis . . . . . . . . . . . . . . : Teredo Tunneling Pseudo-Interface
   Fyzická Adresa. . . . . . . . . . : 00-00-00-00-00-00-00-E0
   Protokol DHCP povolen . . . . . . : Ne
   Automatická konfigurace povolena  : Ano

C:\Users\admin&gt;</div>
<!-- cmd scrollbar -->
<div style="left:698px;top:127px;width:15px;height:800px;background:#e9e9e9;border-left:1px solid #dadada"></div>
<div style="left:700px;top:144px;width:11px;height:209px;background:linear-gradient(to right,#f4f4f4,#dcdcdc);border:1px solid #b5b5b5;border-radius:2px"></div>
<svg style="left:698px;top:127px" width="15" height="800">
  <path d="M4.5 9 L7.5 6 L10.5 9Z" fill="#333"/>
  <path d="M5 118.5 H10 M5 121 H10 M5 123.5 H10" stroke="#777" stroke-width="0.8"/>
  <path d="M4.5 791 L7.5 794 L10.5 791Z" fill="#333"/>
</svg>

<!-- inner taskbar -->
<!-- inner taskbar -->
<div style="left:183px;top:942px;width:1540px;height:34px;background:linear-gradient(to right,#8296ae 0,#8a9eb7 40px,#a5bedb 66px,#a8c1dd 80px,#a8c1dd 1346px,#8195ae 1372px,#8195ae 100%);border-top:1px solid #4f5f73"></div>
<div style="left:183px;top:943px;width:1540px;height:12px;background:linear-gradient(rgba(255,255,255,0.05),rgba(255,255,255,0))"></div>
<div style="left:331px;top:944px;width:47px;height:31px;background:linear-gradient(#dbe7f3,#bdd0e4);border:1px solid #6f8197;border-radius:2px"></div>
<div style="left:429px;top:944px;width:48px;height:31px;background:linear-gradient(#e6eef7,#c8d8ea);border:1px solid #6f8197;border-radius:2px"></div>
<svg style="left:190px;top:944px" width="30" height="30"><use href="#orb" width="30" height="30"/></svg>
<svg style="left:241px;top:947px" width="27" height="25"><use href="#folder" width="27" height="25"/></svg>
<svg style="left:291px;top:948px" width="26" height="24"><use href="#wmp" width="26" height="24"/></svg>
<svg style="left:341px;top:946px" width="26" height="26"><use href="#chrome" width="26" height="26"/></svg>
<svg style="left:390px;top:945px" width="27" height="27"><use href="#ie" width="27" height="27"/></svg>
<svg style="left:439px;top:946px" width="27" height="24"><use href="#cmdi" width="27" height="24"/></svg>
<div class="t" style="left:1561px;top:951px;font-size:10px;color:#e4eaf1">CS</div>
<svg style="left:1585px;top:954px" width="9" height="6"><path d="M0.5 5 L4.5 1 L8.5 5Z" fill="#eef2f6"/></svg>
<svg style="left:1602px;top:951px" width="13" height="13"><use href="#flag" width="13" height="13"/></svg>
<svg style="left:1622px;top:951px" width="13" height="13"><use href="#net" width="13" height="13"/></svg>
<svg style="left:1641px;top:951px" width="13" height="13"><use href="#vol" width="13" height="13"/></svg>
<div class="t" style="left:1675px;top:947px;font-size:9px;color:#eef2f6;letter-spacing:-0.2px">20:27</div>
<div class="t" style="left:1666px;top:961px;font-size:9px;color:#eef2f6;letter-spacing:-0.2px">30.7.2018</div>
<div style="left:1712px;top:944px;width:11px;height:31px;background:linear-gradient(to right,#6b7d93,#56687e);border:1px solid #3c4b5c"></div>


</div></div>
<div id="shotb"></div>

<!-- ad box -->
<div style="left:588px;top:985px;width:728px;height:60px;background:#fff;border:1px solid #9a9a9a"></div>
<div class="t" style="left:605px;top:987px;font-size:24px;color:#707070">Taky nemáme rádi reklamy.</div>
<div class="t" style="left:635px;top:1016px;font-size:23.8px;color:#707070">kdy však zvážíme donate :)</div>
<svg style="left:983px;top:990px" width="54" height="54"><circle cx="27" cy="27" r="26.5" fill="#8c8c8c"/>
  <text x="14" y="40" font-size="36" font-weight="bold" font-family="Liberation Sans" fill="#fff" transform="rotate(12 27 27)">B</text>
  <path d="M22 10 V16 M28 10 V16 M22 38 V44 M28 38 V44" stroke="#fff" stroke-width="2.5" transform="rotate(12 27 27)"/></svg>
<svg style="left:1054px;top:988px" width="86" height="86"><path d="M0.00 0.00h2.98v2.98h-2.98zM2.93 0.00h2.98v2.98h-2.98zM5.86 0.00h2.98v2.98h-2.98zM8.79 0.00h2.98v2.98h-2.98zM11.72 0.00h2.98v2.98h-2.98zM14.66 0.00h2.98v2.98h-2.98zM17.59 0.00h2.98v2.98h-2.98zM23.45 0.00h2.98v2.98h-2.98zM26.38 0.00h2.98v2.98h-2.98zM29.31 0.00h2.98v2.98h-2.98zM32.24 0.00h2.98v2.98h-2.98zM35.17 0.00h2.98v2.98h-2.98zM41.03 0.00h2.98v2.98h-2.98zM43.97 0.00h2.98v2.98h-2.98zM55.69 0.00h2.98v2.98h-2.98zM64.48 0.00h2.98v2.98h-2.98zM67.41 0.00h2.98v2.98h-2.98zM70.34 0.00h2.98v2.98h-2.98zM73.28 0.00h2.98v2.98h-2.98zM76.21 0.00h2.98v2.98h-2.98zM79.14 0.00h2.98v2.98h-2.98zM82.07 0.00h2.98v2.98h-2.98zM0.00 2.93h2.98v2.98h-2.98zM17.59 2.93h2.98v2.98h-2.98zM23.45 2.93h2.98v2.98h-2.98zM26.38 2.93h2.98v2.98h-2.98zM32.24 2.93h2.98v2.98h-2.98zM35.17 2.93h2.98v2.98h-2.98zM43.97 2.93h2.98v2.98h-2.98zM58.62 2.93h2.98v2.98h-2.98zM64.48 2.93h2.98v2.98h-2.98zM82.07 2.93h2.98v2.98h-2.98zM0.00 5.86h2.98v2.98h-2.98zM5.86 5.86h2.98v2.98h-2.98zM8.79 5.86h2.98v2.98h-2.98zM11.72 5.86h2.98v2.98h-2.98zM17.59 5.86h2.98v2.98h-2.98zM29.31 5.86h2.98v2.98h-2.98zM35.17 5.86h2.98v2.98h-2.98zM49.83 5.86h2.98v2.98h-2.98zM52.76 5.86h2.98v2.98h-2.98zM58.62 5.86h2.98v2.98h-2.98zM64.48 5.86h2.98v2.98h-2.98zM70.34 5.86h2.98v2.98h-2.98zM73.28 5.86h2.98v2.98h-2.98zM76.21 5.86h2.98v2.98h-2.98zM82.07 5.86h2.98v2.98h-2.98zM0.00 8.79h2.98v2.98h-2.98zM5.86 8.79h2.98v2.98h-2.98zM8.79 8.79h2.98v2.98h-2.98zM11.72 8.79h2.98v2.98h-2.98zM17.59 8.79h2.98v2.98h-2.98zM23.45 8.79h2.98v2.98h-2.98zM26.38 8.79h2.98v2.98h-2.98zM35.17 8.79h2.98v2.98h-2.98zM38.10 8.79h2.98v2.98h-2.98zM41.03 8.79h2.98v2.98h-2.98zM43.97 8.79h2.98v2.98h-2.98zM46.90 8.79h2.98v2.98h-2.98zM52.76 8.79h2.98v2.98h-2.98zM55.69 8.79h2.98v2.98h-2.98zM58.62 8.79h2.98v2.98h-2.98zM64.48 8.79h2.98v2.98h-2.98zM70.34 8.79h2.98v2.98h-2.98zM73.28 8.79h2.98v2.98h-2.98zM76.21 8.79h2.98v2.98h-2.98zM82.07 8.79h2.98v2.98h-2.98zM0.00 11.72h2.98v2.98h-2.98zM5.86 11.72h2.98v2.98h-2.98zM8.79 11.72h2.98v2.98h-2.98zM11.72 11.72h2.98v2.98h-2.98zM17.59 11.72h2.98v2.98h-2.98zM23.45 11.72h2.98v2.98h-2.98zM26.38 11.72h2.98v2.98h-2.98zM29.31 11.72h2.98v2.98h-2.98zM32.24 11.72h2.98v2.98h-2.98zM35.17 11.72h2.98v2.98h-2.98zM38.10 11.72h2.98v2.98h-2.98zM41.03 11.72h2.98v2.98h-2.98zM43.97 11.72h2.98v2.98h-2.98zM46.90 11.72h2.98v2.98h-2.98zM49.83 11.72h2.98v2.98h-2.98zM52.76 11.72h2.98v2.98h-2.98zM64.48 11.72h2.98v2.98h-2.98zM70.34 11.72h2.98v2.98h-2.98zM73.28 11.72h2.98v2.98h-2.98zM76.21 11.72h2.98v2.98h-2.98zM82.07 11.72h2.98v2.98h-2.98zM0.00 14.66h2.98v2.98h-2.98zM17.59 14.66h2.98v2.98h-2.98zM29.31 14.66h2.98v2.98h-2.98zM35.17 14.66h2.98v2.98h-2.98zM49.83 14.66h2.98v2.98h-2.98zM52.76 14.66h2.98v2.98h-2.98zM55.69 14.66h2.98v2.98h-2.98zM64.48 14.66h2.98v2.98h-2.98zM82.07 14.66h2.98v2.98h-2.98zM0.00 17.59h2.98v2.98h-2.98zM2.93 17.59h2.98v2.98h-2.98zM5.86 17.59h2.98v2.98h-2.98zM8.79 17.59h2.98v2.98h-2.98zM11.72 17.59h2.98v2.98h-2.98zM14.66 17.59h2.98v2.98h-2.98zM17.59 17.59h2.98v2.98h-2.98zM23.45 17.59h2.98v2.98h-2.98zM32.24 17.59h2.98v2.98h-2.98zM43.97 17.59h2.98v2.98h-2.98zM46.90 17.59h2.98v2.98h-2.98zM49.83 17.59h2.98v2.98h-2.98zM52.76 17.59h2.98v2.98h-2.98zM55.69 17.59h2.98v2.98h-2.98zM64.48 17.59h2.98v2.98h-2.98zM67.41 17.59h2.98v2.98h-2.98zM70.34 17.59h2.98v2.98h-2.98zM73.28 17.59h2.98v2.98h-2.98zM76.21 17.59h2.98v2.98h-2.98zM79.14 17.59h2.98v2.98h-2.98zM82.07 17.59h2.98v2.98h-2.98zM23.45 20.52h2.98v2.98h-2.98zM26.38 20.52h2.98v2.98h-2.98zM35.17 20.52h2.98v2.98h-2.98zM38.10 20.52h2.98v2.98h-2.98zM41.03 20.52h2.98v2.98h-2.98zM49.83 20.52h2.98v2.98h-2.98zM0.00 23.45h2.98v2.98h-2.98zM8.79 23.45h2.98v2.98h-2.98zM11.72 23.45h2.98v2.98h-2.98zM14.66 23.45h2.98v2.98h-2.98zM17.59 23.45h2.98v2.98h-2.98zM23.45 23.45h2.98v2.98h-2.98zM26.38 23.45h2.98v2.98h-2.98zM29.31 23.45h2.98v2.98h-2.98zM35.17 23.45h2.98v2.98h-2.98zM38.10 23.45h2.98v2.98h-2.98zM46.90 23.45h2.98v2.98h-2.98zM61.55 23.45h2.98v2.98h-2.98zM64.48 23.45h2.98v2.98h-2.98zM67.41 23.45h2.98v2.98h-2.98zM70.34 23.45h2.98v2.98h-2.98zM76.21 23.45h2.98v2.98h-2.98zM79.14 23.45h2.98v2.98h-2.98zM2.93 26.38h2.98v2.98h-2.98zM14.66 26.38h2.98v2.98h-2.98zM20.52 26.38h2.98v2.98h-2.98zM23.45 26.38h2.98v2.98h-2.98zM41.03 26.38h2.98v2.98h-2.98zM55.69 26.38h2.98v2.98h-2.98zM61.55 26.38h2.98v2.98h-2.98zM76.21 26.38h2.98v2.98h-2.98zM2.93 29.31h2.98v2.98h-2.98zM5.86 29.31h2.98v2.98h-2.98zM8.79 29.31h2.98v2.98h-2.98zM11.72 29.31h2.98v2.98h-2.98zM14.66 29.31h2.98v2.98h-2.98zM17.59 29.31h2.98v2.98h-2.98zM29.31 29.31h2.98v2.98h-2.98zM38.10 29.31h2.98v2.98h-2.98zM46.90 29.31h2.98v2.98h-2.98zM52.76 29.31h2.98v2.98h-2.98zM55.69 29.31h2.98v2.98h-2.98zM64.48 29.31h2.98v2.98h-2.98zM67.41 29.31h2.98v2.98h-2.98zM73.28 29.31h2.98v2.98h-2.98zM76.21 29.31h2.98v2.98h-2.98zM79.14 29.31h2.98v2.98h-2.98zM0.00 32.24h2.98v2.98h-2.98zM5.86 32.24h2.98v2.98h-2.98zM8.79 32.24h2.98v2.98h-2.98zM11.72 32.24h2.98v2.98h-2.98zM20.52 32.24h2.98v2.98h-2.98zM32.24 32.24h2.98v2.98h-2.98zM35.17 32.24h2.98v2.98h-2.98zM38.10 32.24h2.98v2.98h-2.98zM43.97 32.24h2.98v2.98h-2.98zM46.90 32.24h2.98v2.98h-2.98zM49.83 32.24h2.98v2.98h-2.98zM58.62 32.24h2.98v2.98h-2.98zM61.55 32.24h2.98v2.98h-2.98zM73.28 32.24h2.98v2.98h-2.98zM76.21 32.24h2.98v2.98h-2.98zM82.07 32.24h2.98v2.98h-2.98zM0.00 35.17h2.98v2.98h-2.98zM11.72 35.17h2.98v2.98h-2.98zM17.59 35.17h2.98v2.98h-2.98zM23.45 35.17h2.98v2.98h-2.98zM26.38 35.17h2.98v2.98h-2.98zM35.17 35.17h2.98v2.98h-2.98zM38.10 35.17h2.98v2.98h-2.98zM43.97 35.17h2.98v2.98h-2.98zM46.90 35.17h2.98v2.98h-2.98zM49.83 35.17h2.98v2.98h-2.98zM52.76 35.17h2.98v2.98h-2.98zM55.69 35.17h2.98v2.98h-2.98zM58.62 35.17h2.98v2.98h-2.98zM61.55 35.17h2.98v2.98h-2.98zM67.41 35.17h2.98v2.98h-2.98zM73.28 35.17h2.98v2.98h-2.98zM76.21 35.17h2.98v2.98h-2.98zM79.14 35.17h2.98v2.98h-2.98zM82.07 35.17h2.98v2.98h-2.98zM0.00 38.10h2.98v2.98h-2.98zM8.79 38.10h2.98v2.98h-2.98zM11.72 38.10h2.98v2.98h-2.98zM17.59 38.10h2.98v2.98h-2.98zM23.45 38.10h2.98v2.98h-2.98zM26.38 38.10h2.98v2.98h-2.98zM32.24 38.10h2.98v2.98h-2.98zM43.97 38.10h2.98v2.98h-2.98zM55.69 38.10h2.98v2.98h-2.98zM58.62 38.10h2.98v2.98h-2.98zM61.55 38.10h2.98v2.98h-2.98zM64.48 38.10h2.98v2.98h-2.98zM67.41 38.10h2.98v2.98h-2.98zM73.28 38.10h2.98v2.98h-2.98zM76.21 38.10h2.98v2.98h-2.98zM79.14 38.10h2.98v2.98h-2.98zM5.86 41.03h2.98v2.98h-2.98zM8.79 41.03h2.98v2.98h-2.98zM11.72 41.03h2.98v2.98h-2.98zM14.66 41.03h2.98v2.98h-2.98zM17.59 41.03h2.98v2.98h-2.98zM20.52 41.03h2.98v2.98h-2.98zM23.45 41.03h2.98v2.98h-2.98zM35.17 41.03h2.98v2.98h-2.98zM41.03 41.03h2.98v2.98h-2.98zM43.97 41.03h2.98v2.98h-2.98zM46.90 41.03h2.98v2.98h-2.98zM49.83 41.03h2.98v2.98h-2.98zM52.76 41.03h2.98v2.98h-2.98zM58.62 41.03h2.98v2.98h-2.98zM64.48 41.03h2.98v2.98h-2.98zM67.41 41.03h2.98v2.98h-2.98zM70.34 41.03h2.98v2.98h-2.98zM73.28 41.03h2.98v2.98h-2.98zM76.21 41.03h2.98v2.98h-2.98zM79.14 41.03h2.98v2.98h-2.98zM82.07 41.03h2.98v2.98h-2.98zM0.00 43.97h2.98v2.98h-2.98zM20.52 43.97h2.98v2.98h-2.98zM23.45 43.97h2.98v2.98h-2.98zM29.31 43.97h2.98v2.98h-2.98zM38.10 43.97h2.98v2.98h-2.98zM55.69 43.97h2.98v2.98h-2.98zM0.00 46.90h2.98v2.98h-2.98zM2.93 46.90h2.98v2.98h-2.98zM5.86 46.90h2.98v2.98h-2.98zM8.79 46.90h2.98v2.98h-2.98zM11.72 46.90h2.98v2.98h-2.98zM29.31 46.90h2.98v2.98h-2.98zM32.24 46.90h2.98v2.98h-2.98zM49.83 46.90h2.98v2.98h-2.98zM55.69 46.90h2.98v2.98h-2.98zM58.62 46.90h2.98v2.98h-2.98zM61.55 46.90h2.98v2.98h-2.98zM67.41 46.90h2.98v2.98h-2.98zM76.21 46.90h2.98v2.98h-2.98zM79.14 46.90h2.98v2.98h-2.98zM82.07 46.90h2.98v2.98h-2.98zM11.72 49.83h2.98v2.98h-2.98zM14.66 49.83h2.98v2.98h-2.98zM17.59 49.83h2.98v2.98h-2.98zM23.45 49.83h2.98v2.98h-2.98zM29.31 49.83h2.98v2.98h-2.98zM32.24 49.83h2.98v2.98h-2.98zM35.17 49.83h2.98v2.98h-2.98zM46.90 49.83h2.98v2.98h-2.98zM52.76 49.83h2.98v2.98h-2.98zM55.69 49.83h2.98v2.98h-2.98zM58.62 49.83h2.98v2.98h-2.98zM64.48 49.83h2.98v2.98h-2.98zM73.28 49.83h2.98v2.98h-2.98zM76.21 49.83h2.98v2.98h-2.98zM0.00 52.76h2.98v2.98h-2.98zM2.93 52.76h2.98v2.98h-2.98zM5.86 52.76h2.98v2.98h-2.98zM11.72 52.76h2.98v2.98h-2.98zM17.59 52.76h2.98v2.98h-2.98zM26.38 52.76h2.98v2.98h-2.98zM41.03 52.76h2.98v2.98h-2.98zM46.90 52.76h2.98v2.98h-2.98zM49.83 52.76h2.98v2.98h-2.98zM52.76 52.76h2.98v2.98h-2.98zM55.69 52.76h2.98v2.98h-2.98zM58.62 52.76h2.98v2.98h-2.98zM61.55 52.76h2.98v2.98h-2.98zM64.48 52.76h2.98v2.98h-2.98zM67.41 52.76h2.98v2.98h-2.98zM70.34 52.76h2.98v2.98h-2.98zM76.21 52.76h2.98v2.98h-2.98zM0.00 55.69h2.98v2.98h-2.98zM11.72 55.69h2.98v2.98h-2.98zM14.66 55.69h2.98v2.98h-2.98zM17.59 55.69h2.98v2.98h-2.98zM26.38 55.69h2.98v2.98h-2.98zM29.31 55.69h2.98v2.98h-2.98zM32.24 55.69h2.98v2.98h-2.98zM35.17 55.69h2.98v2.98h-2.98zM38.10 55.69h2.98v2.98h-2.98zM43.97 55.69h2.98v2.98h-2.98zM49.83 55.69h2.98v2.98h-2.98zM52.76 55.69h2.98v2.98h-2.98zM58.62 55.69h2.98v2.98h-2.98zM61.55 55.69h2.98v2.98h-2.98zM2.93 58.62h2.98v2.98h-2.98zM8.79 58.62h2.98v2.98h-2.98zM17.59 58.62h2.98v2.98h-2.98zM20.52 58.62h2.98v2.98h-2.98zM26.38 58.62h2.98v2.98h-2.98zM29.31 58.62h2.98v2.98h-2.98zM32.24 58.62h2.98v2.98h-2.98zM35.17 58.62h2.98v2.98h-2.98zM43.97 58.62h2.98v2.98h-2.98zM49.83 58.62h2.98v2.98h-2.98zM55.69 58.62h2.98v2.98h-2.98zM58.62 58.62h2.98v2.98h-2.98zM61.55 58.62h2.98v2.98h-2.98zM64.48 58.62h2.98v2.98h-2.98zM70.34 58.62h2.98v2.98h-2.98zM73.28 58.62h2.98v2.98h-2.98zM82.07 58.62h2.98v2.98h-2.98zM29.31 61.55h2.98v2.98h-2.98zM32.24 61.55h2.98v2.98h-2.98zM38.10 61.55h2.98v2.98h-2.98zM41.03 61.55h2.98v2.98h-2.98zM43.97 61.55h2.98v2.98h-2.98zM46.90 61.55h2.98v2.98h-2.98zM52.76 61.55h2.98v2.98h-2.98zM64.48 61.55h2.98v2.98h-2.98zM67.41 61.55h2.98v2.98h-2.98zM70.34 61.55h2.98v2.98h-2.98zM73.28 61.55h2.98v2.98h-2.98zM76.21 61.55h2.98v2.98h-2.98zM0.00 64.48h2.98v2.98h-2.98zM2.93 64.48h2.98v2.98h-2.98zM5.86 64.48h2.98v2.98h-2.98zM8.79 64.48h2.98v2.98h-2.98zM11.72 64.48h2.98v2.98h-2.98zM14.66 64.48h2.98v2.98h-2.98zM17.59 64.48h2.98v2.98h-2.98zM23.45 64.48h2.98v2.98h-2.98zM38.10 64.48h2.98v2.98h-2.98zM41.03 64.48h2.98v2.98h-2.98zM43.97 64.48h2.98v2.98h-2.98zM64.48 64.48h2.98v2.98h-2.98zM70.34 64.48h2.98v2.98h-2.98zM76.21 64.48h2.98v2.98h-2.98zM0.00 67.41h2.98v2.98h-2.98zM17.59 67.41h2.98v2.98h-2.98zM26.38 67.41h2.98v2.98h-2.98zM29.31 67.41h2.98v2.98h-2.98zM35.17 67.41h2.98v2.98h-2.98zM38.10 67.41h2.98v2.98h-2.98zM41.03 67.41h2.98v2.98h-2.98zM52.76 67.41h2.98v2.98h-2.98zM55.69 67.41h2.98v2.98h-2.98zM58.62 67.41h2.98v2.98h-2.98zM67.41 67.41h2.98v2.98h-2.98zM70.34 67.41h2.98v2.98h-2.98zM73.28 67.41h2.98v2.98h-2.98zM79.14 67.41h2.98v2.98h-2.98zM82.07 67.41h2.98v2.98h-2.98zM0.00 70.34h2.98v2.98h-2.98zM5.86 70.34h2.98v2.98h-2.98zM8.79 70.34h2.98v2.98h-2.98zM11.72 70.34h2.98v2.98h-2.98zM17.59 70.34h2.98v2.98h-2.98zM32.24 70.34h2.98v2.98h-2.98zM38.10 70.34h2.98v2.98h-2.98zM43.97 70.34h2.98v2.98h-2.98zM46.90 70.34h2.98v2.98h-2.98zM52.76 70.34h2.98v2.98h-2.98zM58.62 70.34h2.98v2.98h-2.98zM61.55 70.34h2.98v2.98h-2.98zM64.48 70.34h2.98v2.98h-2.98zM67.41 70.34h2.98v2.98h-2.98zM76.21 70.34h2.98v2.98h-2.98zM79.14 70.34h2.98v2.98h-2.98zM82.07 70.34h2.98v2.98h-2.98zM0.00 73.28h2.98v2.98h-2.98zM5.86 73.28h2.98v2.98h-2.98zM8.79 73.28h2.98v2.98h-2.98zM11.72 73.28h2.98v2.98h-2.98zM17.59 73.28h2.98v2.98h-2.98zM29.31 73.28h2.98v2.98h-2.98zM32.24 73.28h2.98v2.98h-2.98zM41.03 73.28h2.98v2.98h-2.98zM46.90 73.28h2.98v2.98h-2.98zM49.83 73.28h2.98v2.98h-2.98zM52.76 73.28h2.98v2.98h-2.98zM55.69 73.28h2.98v2.98h-2.98zM58.62 73.28h2.98v2.98h-2.98zM61.55 73.28h2.98v2.98h-2.98zM64.48 73.28h2.98v2.98h-2.98zM70.34 73.28h2.98v2.98h-2.98zM76.21 73.28h2.98v2.98h-2.98zM79.14 73.28h2.98v2.98h-2.98zM0.00 76.21h2.98v2.98h-2.98zM5.86 76.21h2.98v2.98h-2.98zM8.79 76.21h2.98v2.98h-2.98zM11.72 76.21h2.98v2.98h-2.98zM17.59 76.21h2.98v2.98h-2.98zM26.38 76.21h2.98v2.98h-2.98zM29.31 76.21h2.98v2.98h-2.98zM38.10 76.21h2.98v2.98h-2.98zM41.03 76.21h2.98v2.98h-2.98zM43.97 76.21h2.98v2.98h-2.98zM49.83 76.21h2.98v2.98h-2.98zM58.62 76.21h2.98v2.98h-2.98zM61.55 76.21h2.98v2.98h-2.98zM70.34 76.21h2.98v2.98h-2.98zM76.21 76.21h2.98v2.98h-2.98zM79.14 76.21h2.98v2.98h-2.98zM82.07 76.21h2.98v2.98h-2.98zM0.00 79.14h2.98v2.98h-2.98zM17.59 79.14h2.98v2.98h-2.98zM26.38 79.14h2.98v2.98h-2.98zM29.31 79.14h2.98v2.98h-2.98zM32.24 79.14h2.98v2.98h-2.98zM35.17 79.14h2.98v2.98h-2.98zM41.03 79.14h2.98v2.98h-2.98zM58.62 79.14h2.98v2.98h-2.98zM61.55 79.14h2.98v2.98h-2.98zM64.48 79.14h2.98v2.98h-2.98zM70.34 79.14h2.98v2.98h-2.98zM73.28 79.14h2.98v2.98h-2.98zM79.14 79.14h2.98v2.98h-2.98zM82.07 79.14h2.98v2.98h-2.98zM0.00 82.07h2.98v2.98h-2.98zM2.93 82.07h2.98v2.98h-2.98zM5.86 82.07h2.98v2.98h-2.98zM8.79 82.07h2.98v2.98h-2.98zM11.72 82.07h2.98v2.98h-2.98zM14.66 82.07h2.98v2.98h-2.98zM17.59 82.07h2.98v2.98h-2.98zM23.45 82.07h2.98v2.98h-2.98zM26.38 82.07h2.98v2.98h-2.98zM32.24 82.07h2.98v2.98h-2.98zM35.17 82.07h2.98v2.98h-2.98zM38.10 82.07h2.98v2.98h-2.98zM55.69 82.07h2.98v2.98h-2.98zM61.55 82.07h2.98v2.98h-2.98zM67.41 82.07h2.98v2.98h-2.98zM73.28 82.07h2.98v2.98h-2.98zM76.21 82.07h2.98v2.98h-2.98zM79.14 82.07h2.98v2.98h-2.98zM82.07 82.07h2.98v2.98h-2.98z" fill="#000"/></svg>
<svg style="left:1155px;top:990px" width="54" height="54"><defs><linearGradient id="ltg" x1="0" y1="0" x2="1" y2="1"><stop offset="0" stop-color="#eee"/><stop offset="1" stop-color="#9a9a9a"/></linearGradient></defs>
  <circle cx="27" cy="27" r="26" fill="#bdbdbd" stroke="#8a8a8a" stroke-width="1.5"/><circle cx="27" cy="27" r="21" fill="url(#ltg)" stroke="#a0a0a0"/>
  <path d="M24 10 L18 34 L14 35.5 L13.5 38.5 L17 37.5 L15.5 43 H38 L39 39 H23.5 L25 33 L31 30.5 L31.5 27.5 L26 29.5 L30 13Z" fill="#fff" stroke="#888" stroke-width="1"/></svg>
<svg style="left:1226px;top:988px" width="86" height="86"><path d="M0.00 0.00h2.98v2.98h-2.98zM2.93 0.00h2.98v2.98h-2.98zM5.86 0.00h2.98v2.98h-2.98zM8.79 0.00h2.98v2.98h-2.98zM11.72 0.00h2.98v2.98h-2.98zM14.66 0.00h2.98v2.98h-2.98zM17.59 0.00h2.98v2.98h-2.98zM29.31 0.00h2.98v2.98h-2.98zM32.24 0.00h2.98v2.98h-2.98zM35.17 0.00h2.98v2.98h-2.98zM43.97 0.00h2.98v2.98h-2.98zM58.62 0.00h2.98v2.98h-2.98zM64.48 0.00h2.98v2.98h-2.98zM67.41 0.00h2.98v2.98h-2.98zM70.34 0.00h2.98v2.98h-2.98zM73.28 0.00h2.98v2.98h-2.98zM76.21 0.00h2.98v2.98h-2.98zM79.14 0.00h2.98v2.98h-2.98zM82.07 0.00h2.98v2.98h-2.98zM0.00 2.93h2.98v2.98h-2.98zM17.59 2.93h2.98v2.98h-2.98zM32.24 2.93h2.98v2.98h-2.98zM35.17 2.93h2.98v2.98h-2.98zM38.10 2.93h2.98v2.98h-2.98zM41.03 2.93h2.98v2.98h-2.98zM46.90 2.93h2.98v2.98h-2.98zM52.76 2.93h2.98v2.98h-2.98zM64.48 2.93h2.98v2.98h-2.98zM82.07 2.93h2.98v2.98h-2.98zM0.00 5.86h2.98v2.98h-2.98zM5.86 5.86h2.98v2.98h-2.98zM8.79 5.86h2.98v2.98h-2.98zM11.72 5.86h2.98v2.98h-2.98zM17.59 5.86h2.98v2.98h-2.98zM23.45 5.86h2.98v2.98h-2.98zM26.38 5.86h2.98v2.98h-2.98zM32.24 5.86h2.98v2.98h-2.98zM38.10 5.86h2.98v2.98h-2.98zM41.03 5.86h2.98v2.98h-2.98zM46.90 5.86h2.98v2.98h-2.98zM52.76 5.86h2.98v2.98h-2.98zM55.69 5.86h2.98v2.98h-2.98zM58.62 5.86h2.98v2.98h-2.98zM64.48 5.86h2.98v2.98h-2.98zM70.34 5.86h2.98v2.98h-2.98zM73.28 5.86h2.98v2.98h-2.98zM76.21 5.86h2.98v2.98h-2.98zM82.07 5.86h2.98v2.98h-2.98zM0.00 8.79h2.98v2.98h-2.98zM5.86 8.79h2.98v2.98h-2.98zM8.79 8.79h2.98v2.98h-2.98zM11.72 8.79h2.98v2.98h-2.98zM17.59 8.79h2.98v2.98h-2.98zM23.45 8.79h2.98v2.98h-2.98zM26.38 8.79h2.98v2.98h-2.98zM32.24 8.79h2.98v2.98h-2.98zM38.10 8.79h2.98v2.98h-2.98zM41.03 8.79h2.98v2.98h-2.98zM46.90 8.79h2.98v2.98h-2.98zM55.69 8.79h2.98v2.98h-2.98zM58.62 8.79h2.98v2.98h-2.98zM64.48 8.79h2.98v2.98h-2.98zM70.34 8.79h2.98v2.98h-2.98zM73.28 8.79h2.98v2.98h-2.98zM76.21 8.79h2.98v2.98h-2.98zM82.07 8.79h2.98v2.98h-2.98zM0.00 11.72h2.98v2.98h-2.98zM5.86 11.72h2.98v2.98h-2.98zM8.79 11.72h2.98v2.98h-2.98zM11.72 11.72h2.98v2.98h-2.98zM17.59 11.72h2.98v2.98h-2.98zM23.45 11.72h2.98v2.98h-2.98zM32.24 11.72h2.98v2.98h-2.98zM35.17 11.72h2.98v2.98h-2.98zM41.03 11.72h2.98v2.98h-2.98zM43.97 11.72h2.98v2.98h-2.98zM55.69 11.72h2.98v2.98h-2.98zM64.48 11.72h2.98v2.98h-2.98zM70.34 11.72h2.98v2.98h-2.98zM73.28 11.72h2.98v2.98h-2.98zM76.21 11.72h2.98v2.98h-2.98zM82.07 11.72h2.98v2.98h-2.98zM0.00 14.66h2.98v2.98h-2.98zM17.59 14.66h2.98v2.98h-2.98zM23.45 14.66h2.98v2.98h-2.98zM26.38 14.66h2.98v2.98h-2.98zM38.10 14.66h2.98v2.98h-2.98zM43.97 14.66h2.98v2.98h-2.98zM49.83 14.66h2.98v2.98h-2.98zM55.69 14.66h2.98v2.98h-2.98zM64.48 14.66h2.98v2.98h-2.98zM82.07 14.66h2.98v2.98h-2.98zM0.00 17.59h2.98v2.98h-2.98zM2.93 17.59h2.98v2.98h-2.98zM5.86 17.59h2.98v2.98h-2.98zM8.79 17.59h2.98v2.98h-2.98zM11.72 17.59h2.98v2.98h-2.98zM14.66 17.59h2.98v2.98h-2.98zM17.59 17.59h2.98v2.98h-2.98zM29.31 17.59h2.98v2.98h-2.98zM43.97 17.59h2.98v2.98h-2.98zM52.76 17.59h2.98v2.98h-2.98zM58.62 17.59h2.98v2.98h-2.98zM64.48 17.59h2.98v2.98h-2.98zM67.41 17.59h2.98v2.98h-2.98zM70.34 17.59h2.98v2.98h-2.98zM73.28 17.59h2.98v2.98h-2.98zM76.21 17.59h2.98v2.98h-2.98zM79.14 17.59h2.98v2.98h-2.98zM82.07 17.59h2.98v2.98h-2.98zM26.38 20.52h2.98v2.98h-2.98zM32.24 20.52h2.98v2.98h-2.98zM38.10 20.52h2.98v2.98h-2.98zM41.03 20.52h2.98v2.98h-2.98zM52.76 20.52h2.98v2.98h-2.98zM58.62 20.52h2.98v2.98h-2.98zM0.00 23.45h2.98v2.98h-2.98zM2.93 23.45h2.98v2.98h-2.98zM5.86 23.45h2.98v2.98h-2.98zM8.79 23.45h2.98v2.98h-2.98zM14.66 23.45h2.98v2.98h-2.98zM17.59 23.45h2.98v2.98h-2.98zM26.38 23.45h2.98v2.98h-2.98zM29.31 23.45h2.98v2.98h-2.98zM32.24 23.45h2.98v2.98h-2.98zM38.10 23.45h2.98v2.98h-2.98zM46.90 23.45h2.98v2.98h-2.98zM52.76 23.45h2.98v2.98h-2.98zM55.69 23.45h2.98v2.98h-2.98zM58.62 23.45h2.98v2.98h-2.98zM61.55 23.45h2.98v2.98h-2.98zM67.41 23.45h2.98v2.98h-2.98zM70.34 23.45h2.98v2.98h-2.98zM73.28 23.45h2.98v2.98h-2.98zM79.14 23.45h2.98v2.98h-2.98zM11.72 26.38h2.98v2.98h-2.98zM14.66 26.38h2.98v2.98h-2.98zM17.59 26.38h2.98v2.98h-2.98zM20.52 26.38h2.98v2.98h-2.98zM23.45 26.38h2.98v2.98h-2.98zM29.31 26.38h2.98v2.98h-2.98zM32.24 26.38h2.98v2.98h-2.98zM35.17 26.38h2.98v2.98h-2.98zM49.83 26.38h2.98v2.98h-2.98zM58.62 26.38h2.98v2.98h-2.98zM67.41 26.38h2.98v2.98h-2.98zM70.34 26.38h2.98v2.98h-2.98zM79.14 26.38h2.98v2.98h-2.98zM8.79 29.31h2.98v2.98h-2.98zM14.66 29.31h2.98v2.98h-2.98zM29.31 29.31h2.98v2.98h-2.98zM46.90 29.31h2.98v2.98h-2.98zM55.69 29.31h2.98v2.98h-2.98zM58.62 29.31h2.98v2.98h-2.98zM61.55 29.31h2.98v2.98h-2.98zM70.34 29.31h2.98v2.98h-2.98zM73.28 29.31h2.98v2.98h-2.98zM79.14 29.31h2.98v2.98h-2.98zM0.00 32.24h2.98v2.98h-2.98zM2.93 32.24h2.98v2.98h-2.98zM8.79 32.24h2.98v2.98h-2.98zM11.72 32.24h2.98v2.98h-2.98zM29.31 32.24h2.98v2.98h-2.98zM35.17 32.24h2.98v2.98h-2.98zM38.10 32.24h2.98v2.98h-2.98zM43.97 32.24h2.98v2.98h-2.98zM61.55 32.24h2.98v2.98h-2.98zM64.48 32.24h2.98v2.98h-2.98zM73.28 32.24h2.98v2.98h-2.98zM2.93 35.17h2.98v2.98h-2.98zM14.66 35.17h2.98v2.98h-2.98zM23.45 35.17h2.98v2.98h-2.98zM32.24 35.17h2.98v2.98h-2.98zM38.10 35.17h2.98v2.98h-2.98zM43.97 35.17h2.98v2.98h-2.98zM52.76 35.17h2.98v2.98h-2.98zM55.69 35.17h2.98v2.98h-2.98zM58.62 35.17h2.98v2.98h-2.98zM61.55 35.17h2.98v2.98h-2.98zM70.34 35.17h2.98v2.98h-2.98zM73.28 35.17h2.98v2.98h-2.98zM76.21 35.17h2.98v2.98h-2.98zM0.00 38.10h2.98v2.98h-2.98zM5.86 38.10h2.98v2.98h-2.98zM8.79 38.10h2.98v2.98h-2.98zM11.72 38.10h2.98v2.98h-2.98zM17.59 38.10h2.98v2.98h-2.98zM20.52 38.10h2.98v2.98h-2.98zM26.38 38.10h2.98v2.98h-2.98zM32.24 38.10h2.98v2.98h-2.98zM38.10 38.10h2.98v2.98h-2.98zM41.03 38.10h2.98v2.98h-2.98zM46.90 38.10h2.98v2.98h-2.98zM49.83 38.10h2.98v2.98h-2.98zM52.76 38.10h2.98v2.98h-2.98zM58.62 38.10h2.98v2.98h-2.98zM61.55 38.10h2.98v2.98h-2.98zM82.07 38.10h2.98v2.98h-2.98zM8.79 41.03h2.98v2.98h-2.98zM11.72 41.03h2.98v2.98h-2.98zM17.59 41.03h2.98v2.98h-2.98zM26.38 41.03h2.98v2.98h-2.98zM29.31 41.03h2.98v2.98h-2.98zM35.17 41.03h2.98v2.98h-2.98zM38.10 41.03h2.98v2.98h-2.98zM43.97 41.03h2.98v2.98h-2.98zM49.83 41.03h2.98v2.98h-2.98zM52.76 41.03h2.98v2.98h-2.98zM58.62 41.03h2.98v2.98h-2.98zM61.55 41.03h2.98v2.98h-2.98zM73.28 41.03h2.98v2.98h-2.98zM2.93 43.97h2.98v2.98h-2.98zM5.86 43.97h2.98v2.98h-2.98zM8.79 43.97h2.98v2.98h-2.98zM11.72 43.97h2.98v2.98h-2.98zM23.45 43.97h2.98v2.98h-2.98zM26.38 43.97h2.98v2.98h-2.98zM29.31 43.97h2.98v2.98h-2.98zM41.03 43.97h2.98v2.98h-2.98zM43.97 43.97h2.98v2.98h-2.98zM49.83 43.97h2.98v2.98h-2.98zM55.69 43.97h2.98v2.98h-2.98zM58.62 43.97h2.98v2.98h-2.98zM64.48 43.97h2.98v2.98h-2.98zM70.34 43.97h2.98v2.98h-2.98zM79.14 43.97h2.98v2.98h-2.98zM82.07 43.97h2.98v2.98h-2.98zM2.93 46.90h2.98v2.98h-2.98zM5.86 46.90h2.98v2.98h-2.98zM8.79 46.90h2.98v2.98h-2.98zM14.66 46.90h2.98v2.98h-2.98zM32.24 46.90h2.98v2.98h-2.98zM46.90 46.90h2.98v2.98h-2.98zM61.55 46.90h2.98v2.98h-2.98zM79.14 46.90h2.98v2.98h-2.98zM0.00 49.83h2.98v2.98h-2.98zM2.93 49.83h2.98v2.98h-2.98zM5.86 49.83h2.98v2.98h-2.98zM8.79 49.83h2.98v2.98h-2.98zM11.72 49.83h2.98v2.98h-2.98zM20.52 49.83h2.98v2.98h-2.98zM29.31 49.83h2.98v2.98h-2.98zM41.03 49.83h2.98v2.98h-2.98zM58.62 49.83h2.98v2.98h-2.98zM67.41 49.83h2.98v2.98h-2.98zM70.34 49.83h2.98v2.98h-2.98zM73.28 49.83h2.98v2.98h-2.98zM76.21 49.83h2.98v2.98h-2.98zM79.14 49.83h2.98v2.98h-2.98zM82.07 49.83h2.98v2.98h-2.98zM0.00 52.76h2.98v2.98h-2.98zM26.38 52.76h2.98v2.98h-2.98zM35.17 52.76h2.98v2.98h-2.98zM41.03 52.76h2.98v2.98h-2.98zM43.97 52.76h2.98v2.98h-2.98zM46.90 52.76h2.98v2.98h-2.98zM49.83 52.76h2.98v2.98h-2.98zM55.69 52.76h2.98v2.98h-2.98zM61.55 52.76h2.98v2.98h-2.98zM70.34 52.76h2.98v2.98h-2.98zM73.28 52.76h2.98v2.98h-2.98zM82.07 52.76h2.98v2.98h-2.98zM2.93 55.69h2.98v2.98h-2.98zM5.86 55.69h2.98v2.98h-2.98zM8.79 55.69h2.98v2.98h-2.98zM11.72 55.69h2.98v2.98h-2.98zM14.66 55.69h2.98v2.98h-2.98zM20.52 55.69h2.98v2.98h-2.98zM29.31 55.69h2.98v2.98h-2.98zM38.10 55.69h2.98v2.98h-2.98zM43.97 55.69h2.98v2.98h-2.98zM46.90 55.69h2.98v2.98h-2.98zM52.76 55.69h2.98v2.98h-2.98zM64.48 55.69h2.98v2.98h-2.98zM76.21 55.69h2.98v2.98h-2.98zM82.07 55.69h2.98v2.98h-2.98zM0.00 58.62h2.98v2.98h-2.98zM2.93 58.62h2.98v2.98h-2.98zM8.79 58.62h2.98v2.98h-2.98zM11.72 58.62h2.98v2.98h-2.98zM17.59 58.62h2.98v2.98h-2.98zM20.52 58.62h2.98v2.98h-2.98zM26.38 58.62h2.98v2.98h-2.98zM43.97 58.62h2.98v2.98h-2.98zM46.90 58.62h2.98v2.98h-2.98zM58.62 58.62h2.98v2.98h-2.98zM61.55 58.62h2.98v2.98h-2.98zM79.14 58.62h2.98v2.98h-2.98zM82.07 58.62h2.98v2.98h-2.98zM23.45 61.55h2.98v2.98h-2.98zM29.31 61.55h2.98v2.98h-2.98zM32.24 61.55h2.98v2.98h-2.98zM43.97 61.55h2.98v2.98h-2.98zM46.90 61.55h2.98v2.98h-2.98zM49.83 61.55h2.98v2.98h-2.98zM52.76 61.55h2.98v2.98h-2.98zM61.55 61.55h2.98v2.98h-2.98zM64.48 61.55h2.98v2.98h-2.98zM76.21 61.55h2.98v2.98h-2.98zM79.14 61.55h2.98v2.98h-2.98zM82.07 61.55h2.98v2.98h-2.98zM0.00 64.48h2.98v2.98h-2.98zM2.93 64.48h2.98v2.98h-2.98zM5.86 64.48h2.98v2.98h-2.98zM8.79 64.48h2.98v2.98h-2.98zM11.72 64.48h2.98v2.98h-2.98zM14.66 64.48h2.98v2.98h-2.98zM17.59 64.48h2.98v2.98h-2.98zM23.45 64.48h2.98v2.98h-2.98zM26.38 64.48h2.98v2.98h-2.98zM29.31 64.48h2.98v2.98h-2.98zM35.17 64.48h2.98v2.98h-2.98zM38.10 64.48h2.98v2.98h-2.98zM43.97 64.48h2.98v2.98h-2.98zM49.83 64.48h2.98v2.98h-2.98zM55.69 64.48h2.98v2.98h-2.98zM58.62 64.48h2.98v2.98h-2.98zM64.48 64.48h2.98v2.98h-2.98zM67.41 64.48h2.98v2.98h-2.98zM76.21 64.48h2.98v2.98h-2.98zM79.14 64.48h2.98v2.98h-2.98zM82.07 64.48h2.98v2.98h-2.98zM0.00 67.41h2.98v2.98h-2.98zM17.59 67.41h2.98v2.98h-2.98zM23.45 67.41h2.98v2.98h-2.98zM29.31 67.41h2.98v2.98h-2.98zM32.24 67.41h2.98v2.98h-2.98zM35.17 67.41h2.98v2.98h-2.98zM43.97 67.41h2.98v2.98h-2.98zM46.90 67.41h2.98v2.98h-2.98zM49.83 67.41h2.98v2.98h-2.98zM52.76 67.41h2.98v2.98h-2.98zM55.69 67.41h2.98v2.98h-2.98zM58.62 67.41h2.98v2.98h-2.98zM61.55 67.41h2.98v2.98h-2.98zM79.14 67.41h2.98v2.98h-2.98zM0.00 70.34h2.98v2.98h-2.98zM5.86 70.34h2.98v2.98h-2.98zM8.79 70.34h2.98v2.98h-2.98zM11.72 70.34h2.98v2.98h-2.98zM17.59 70.34h2.98v2.98h-2.98zM26.38 70.34h2.98v2.98h-2.98zM35.17 70.34h2.98v2.98h-2.98zM38.10 70.34h2.98v2.98h-2.98zM46.90 70.34h2.98v2.98h-2.98zM52.76 70.34h2.98v2.98h-2.98zM61.55 70.34h2.98v2.98h-2.98zM64.48 70.34h2.98v2.98h-2.98zM76.21 70.34h2.98v2.98h-2.98zM79.14 70.34h2.98v2.98h-2.98zM0.00 73.28h2.98v2.98h-2.98zM5.86 73.28h2.98v2.98h-2.98zM8.79 73.28h2.98v2.98h-2.98zM11.72 73.28h2.98v2.98h-2.98zM17.59 73.28h2.98v2.98h-2.98zM52.76 73.28h2.98v2.98h-2.98zM55.69 73.28h2.98v2.98h-2.98zM58.62 73.28h2.98v2.98h-2.98zM67.41 73.28h2.98v2.98h-2.98zM70.34 73.28h2.98v2.98h-2.98zM73.28 73.28h2.98v2.98h-2.98zM76.21 73.28h2.98v2.98h-2.98zM79.14 73.28h2.98v2.98h-2.98zM0.00 76.21h2.98v2.98h-2.98zM5.86 76.21h2.98v2.98h-2.98zM8.79 76.21h2.98v2.98h-2.98zM11.72 76.21h2.98v2.98h-2.98zM17.59 76.21h2.98v2.98h-2.98zM29.31 76.21h2.98v2.98h-2.98zM32.24 76.21h2.98v2.98h-2.98zM35.17 76.21h2.98v2.98h-2.98zM38.10 76.21h2.98v2.98h-2.98zM41.03 76.21h2.98v2.98h-2.98zM49.83 76.21h2.98v2.98h-2.98zM52.76 76.21h2.98v2.98h-2.98zM55.69 76.21h2.98v2.98h-2.98zM58.62 76.21h2.98v2.98h-2.98zM64.48 76.21h2.98v2.98h-2.98zM73.28 76.21h2.98v2.98h-2.98zM76.21 76.21h2.98v2.98h-2.98zM0.00 79.14h2.98v2.98h-2.98zM17.59 79.14h2.98v2.98h-2.98zM23.45 79.14h2.98v2.98h-2.98zM32.24 79.14h2.98v2.98h-2.98zM41.03 79.14h2.98v2.98h-2.98zM43.97 79.14h2.98v2.98h-2.98zM46.90 79.14h2.98v2.98h-2.98zM49.83 79.14h2.98v2.98h-2.98zM61.55 79.14h2.98v2.98h-2.98zM64.48 79.14h2.98v2.98h-2.98zM67.41 79.14h2.98v2.98h-2.98zM70.34 79.14h2.98v2.98h-2.98zM0.00 82.07h2.98v2.98h-2.98zM2.93 82.07h2.98v2.98h-2.98zM5.86 82.07h2.98v2.98h-2.98zM8.79 82.07h2.98v2.98h-2.98zM11.72 82.07h2.98v2.98h-2.98zM14.66 82.07h2.98v2.98h-2.98zM17.59 82.07h2.98v2.98h-2.98zM23.45 82.07h2.98v2.98h-2.98zM26.38 82.07h2.98v2.98h-2.98zM32.24 82.07h2.98v2.98h-2.98zM35.17 82.07h2.98v2.98h-2.98zM38.10 82.07h2.98v2.98h-2.98zM49.83 82.07h2.98v2.98h-2.98zM55.69 82.07h2.98v2.98h-2.98zM61.55 82.07h2.98v2.98h-2.98zM67.41 82.07h2.98v2.98h-2.98zM76.21 82.07h2.98v2.98h-2.98zM82.07 82.07h2.98v2.98h-2.98z" fill="#000"/></svg>


<div id="status">https://ctrlv.cz/shots/2018/07/30/Vb6o.png</div>

<!-- ========== TASKBAR ========== -->
<div style="left:0;top:1040px;width:1920px;height:40px;background:linear-gradient(to right,#8296ae 0,#8a9eb7 50px,#a5bedb 82px,#a8c1dd 100px,#a8c1dd 1672px,#8195ae 1702px,#8195ae 100%);border-top:1px solid #4f5f73"></div>
<div style="left:0;top:1041px;width:1920px;height:14px;background:linear-gradient(rgba(255,255,255,0.05),rgba(255,255,255,0))"></div>
<div style="left:183px;top:1041px;width:60px;height:39px;background:linear-gradient(#dce8f4,#bfd2e6);border:1px solid #6f8197;border-radius:2px"></div>
<div style="left:307px;top:1041px;width:60px;height:39px;background:linear-gradient(#dce8f4,#bfd2e6);border:1px solid #6f8197;border-radius:2px"></div>
<svg style="left:8px;top:1042px" width="38" height="38"><use href="#orb" width="38" height="38"/></svg>
<svg style="left:72px;top:1046px" width="34" height="30"><use href="#folder" width="34" height="30"/></svg>
<svg style="left:135px;top:1047px" width="32" height="29"><use href="#wmp" width="32" height="29"/></svg>
<svg style="left:197px;top:1044px" width="32" height="32"><use href="#chrome" width="32" height="32"/></svg>
<svg style="left:258px;top:1043px" width="33" height="33"><use href="#ie" width="33" height="33"/></svg>
<svg style="left:321px;top:1044px" width="32" height="32"><use href="#steam" width="32" height="32"/></svg>
<div class="t" style="left:1719px;top:1051px;font-size:12.5px;color:#e4eaf1">CS</div>
<svg style="left:1748px;top:1055px" width="11" height="7"><path d="M0.5 6 L5.5 1 L10.5 6Z" fill="#eef2f6"/></svg>
<svg style="left:1769px;top:1050px" width="17" height="17"><use href="#flag" width="17" height="17"/></svg>
<svg style="left:1794px;top:1050px" width="17" height="17"><use href="#net" width="17" height="17"/></svg>
<svg style="left:1818px;top:1050px" width="17" height="17"><use href="#vol" width="17" height="17"/></svg>
<div class="t" style="left:1859px;top:1046px;font-size:11.5px;color:#f2f5f8;letter-spacing:-0.2px">21:24</div>
<div class="t" style="left:1848px;top:1063px;font-size:11.5px;color:#f2f5f8;letter-spacing:-0.2px">30.7.2018</div>
<div style="left:1906px;top:1041px;width:14px;height:39px;background:linear-gradient(to right,#6b7d93,#56687e);border:1px solid #3c4b5c"></div>

</body></html>
